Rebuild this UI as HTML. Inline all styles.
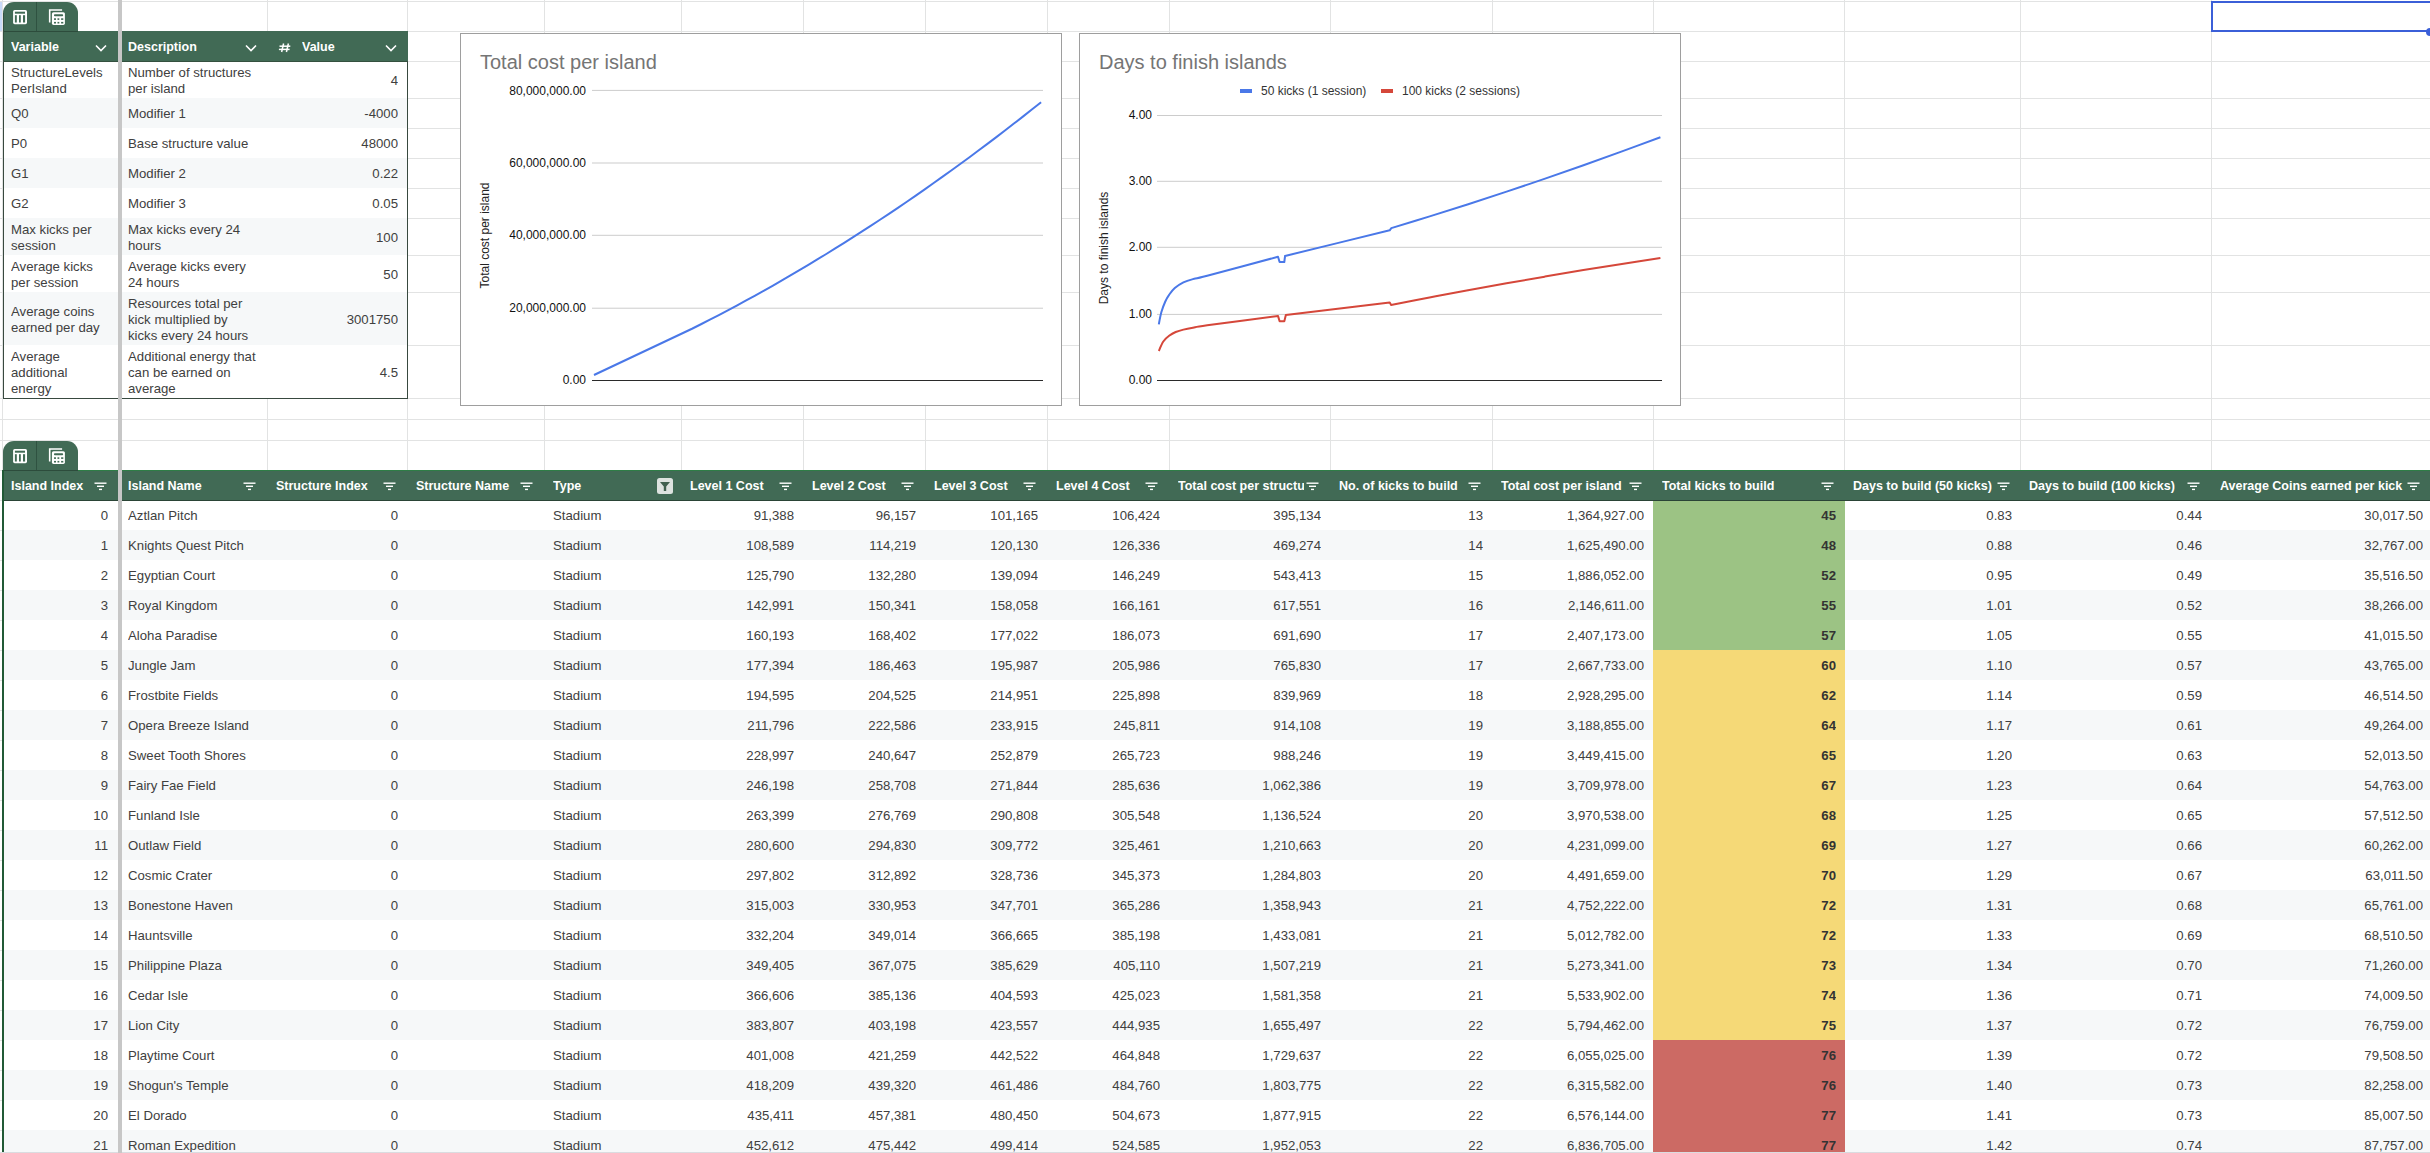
<!DOCTYPE html>
<html><head><meta charset="utf-8"><style>
html,body{margin:0;padding:0;}
body{width:2430px;height:1153px;overflow:hidden;position:relative;background:#fff;font-family:"Liberation Sans", sans-serif;}
</style></head><body>
<div style="position:absolute;left:0px;top:1px;width:2430px;height:1px;background:#e2e3e3;"></div>
<div style="position:absolute;left:0px;top:31px;width:2430px;height:1px;background:#e2e3e3;"></div>
<div style="position:absolute;left:0px;top:61px;width:2430px;height:1px;background:#e2e3e3;"></div>
<div style="position:absolute;left:0px;top:98px;width:2430px;height:1px;background:#e2e3e3;"></div>
<div style="position:absolute;left:0px;top:128px;width:2430px;height:1px;background:#e2e3e3;"></div>
<div style="position:absolute;left:0px;top:158px;width:2430px;height:1px;background:#e2e3e3;"></div>
<div style="position:absolute;left:0px;top:188px;width:2430px;height:1px;background:#e2e3e3;"></div>
<div style="position:absolute;left:0px;top:218px;width:2430px;height:1px;background:#e2e3e3;"></div>
<div style="position:absolute;left:0px;top:255px;width:2430px;height:1px;background:#e2e3e3;"></div>
<div style="position:absolute;left:0px;top:292px;width:2430px;height:1px;background:#e2e3e3;"></div>
<div style="position:absolute;left:0px;top:345px;width:2430px;height:1px;background:#e2e3e3;"></div>
<div style="position:absolute;left:0px;top:398px;width:2430px;height:1px;background:#e2e3e3;"></div>
<div style="position:absolute;left:0px;top:419px;width:2430px;height:1px;background:#e2e3e3;"></div>
<div style="position:absolute;left:0px;top:440px;width:2430px;height:1px;background:#e2e3e3;"></div>
<div style="position:absolute;left:0px;top:470px;width:2430px;height:1px;background:#e2e3e3;"></div>
<div style="position:absolute;left:0px;top:500px;width:2430px;height:1px;background:#e2e3e3;"></div>
<div style="position:absolute;left:0px;top:530px;width:2430px;height:1px;background:#e2e3e3;"></div>
<div style="position:absolute;left:0px;top:560px;width:2430px;height:1px;background:#e2e3e3;"></div>
<div style="position:absolute;left:0px;top:590px;width:2430px;height:1px;background:#e2e3e3;"></div>
<div style="position:absolute;left:0px;top:620px;width:2430px;height:1px;background:#e2e3e3;"></div>
<div style="position:absolute;left:0px;top:650px;width:2430px;height:1px;background:#e2e3e3;"></div>
<div style="position:absolute;left:0px;top:680px;width:2430px;height:1px;background:#e2e3e3;"></div>
<div style="position:absolute;left:0px;top:710px;width:2430px;height:1px;background:#e2e3e3;"></div>
<div style="position:absolute;left:0px;top:740px;width:2430px;height:1px;background:#e2e3e3;"></div>
<div style="position:absolute;left:0px;top:770px;width:2430px;height:1px;background:#e2e3e3;"></div>
<div style="position:absolute;left:0px;top:800px;width:2430px;height:1px;background:#e2e3e3;"></div>
<div style="position:absolute;left:0px;top:830px;width:2430px;height:1px;background:#e2e3e3;"></div>
<div style="position:absolute;left:0px;top:860px;width:2430px;height:1px;background:#e2e3e3;"></div>
<div style="position:absolute;left:0px;top:890px;width:2430px;height:1px;background:#e2e3e3;"></div>
<div style="position:absolute;left:0px;top:920px;width:2430px;height:1px;background:#e2e3e3;"></div>
<div style="position:absolute;left:0px;top:950px;width:2430px;height:1px;background:#e2e3e3;"></div>
<div style="position:absolute;left:0px;top:980px;width:2430px;height:1px;background:#e2e3e3;"></div>
<div style="position:absolute;left:0px;top:1010px;width:2430px;height:1px;background:#e2e3e3;"></div>
<div style="position:absolute;left:0px;top:1040px;width:2430px;height:1px;background:#e2e3e3;"></div>
<div style="position:absolute;left:0px;top:1070px;width:2430px;height:1px;background:#e2e3e3;"></div>
<div style="position:absolute;left:0px;top:1100px;width:2430px;height:1px;background:#e2e3e3;"></div>
<div style="position:absolute;left:0px;top:1130px;width:2430px;height:1px;background:#e2e3e3;"></div>
<div style="position:absolute;left:2px;top:0px;width:1px;height:1153px;background:#e2e3e3;"></div>
<div style="position:absolute;left:267px;top:0px;width:1px;height:1153px;background:#e2e3e3;"></div>
<div style="position:absolute;left:407px;top:0px;width:1px;height:1153px;background:#e2e3e3;"></div>
<div style="position:absolute;left:544px;top:0px;width:1px;height:1153px;background:#e2e3e3;"></div>
<div style="position:absolute;left:681px;top:0px;width:1px;height:1153px;background:#e2e3e3;"></div>
<div style="position:absolute;left:803px;top:0px;width:1px;height:1153px;background:#e2e3e3;"></div>
<div style="position:absolute;left:925px;top:0px;width:1px;height:1153px;background:#e2e3e3;"></div>
<div style="position:absolute;left:1047px;top:0px;width:1px;height:1153px;background:#e2e3e3;"></div>
<div style="position:absolute;left:1169px;top:0px;width:1px;height:1153px;background:#e2e3e3;"></div>
<div style="position:absolute;left:1330px;top:0px;width:1px;height:1153px;background:#e2e3e3;"></div>
<div style="position:absolute;left:1492px;top:0px;width:1px;height:1153px;background:#e2e3e3;"></div>
<div style="position:absolute;left:1653px;top:0px;width:1px;height:1153px;background:#e2e3e3;"></div>
<div style="position:absolute;left:1844px;top:0px;width:1px;height:1153px;background:#e2e3e3;"></div>
<div style="position:absolute;left:2020px;top:0px;width:1px;height:1153px;background:#e2e3e3;"></div>
<div style="position:absolute;left:2211px;top:0px;width:1px;height:1153px;background:#e2e3e3;"></div>
<div style="position:absolute;left:0px;top:2px;width:2px;height:29px;background:#c9daf8;"></div>
<div style="position:absolute;left:3px;top:2px;width:75px;height:29px;background:#416a55;border-radius:11px 11px 0 0;"></div>
<div style="position:absolute;left:36px;top:2px;width:1px;height:29px;background:#2f5241;"></div>
<svg style="position:absolute;left:0px;top:0px" width="80" height="32" viewBox="0 0 80 32"><rect x="13.1" y="9.9" width="13.9" height="14.3" rx="1.6" fill="#fff"/><g fill="#416a55"><rect x="14.9" y="11.7" width="10.1" height="2"/><rect x="14.9" y="15.2" width="1.9" height="7.3"/><rect x="19" y="15.2" width="1.8" height="7.3"/><rect x="23" y="15.2" width="2.1" height="7.3"/></g><path d="M49.7 22.4 V10 H62.1" fill="none" stroke="#fff" stroke-width="1.6"/><rect x="51.9" y="12.2" width="13" height="12.7" rx="1.6" fill="#fff"/><g fill="#416a55"><rect x="54" y="14.2" width="9.1" height="2" rx="0.8"/><rect x="54" y="18.3" width="2" height="1.6"/><rect x="57.5" y="18.3" width="1.8" height="1.6"/><rect x="61.1" y="18.3" width="2.2" height="1.6"/><rect x="54" y="21.9" width="2" height="1.6"/><rect x="57.5" y="21.9" width="1.8" height="1.6"/><rect x="61.1" y="21.9" width="2.2" height="1.6"/></g></svg>
<div style="position:absolute;left:3px;top:31px;width:405px;height:31px;background:#416a55;"></div>
<div style="position:absolute;left:3px;top:31px;width:75px;height:1px;background:#2d4c3c;"></div>
<div style="position:absolute;left:3px;top:13px;width:1px;height:50px;background:#34503f;"></div>
<div style="position:absolute;left:11px;top:31.5px;width:100px;height:30px;font-size:12.5px;line-height:30px;text-align:left;color:#fff;font-weight:bold;white-space:nowrap;overflow:hidden;">Variable</div>
<div style="position:absolute;left:128px;top:31.5px;width:130px;height:30px;font-size:12.5px;line-height:30px;text-align:left;color:#fff;font-weight:bold;white-space:nowrap;overflow:hidden;">Description</div>
<svg style="position:absolute;left:0;top:0" width="300" height="60" viewBox="0 0 300 60"><g stroke="#fff" stroke-width="1.5"><line x1="283.6" y1="43.5" x2="281.6" y2="52"/><line x1="288.4" y1="43.5" x2="286.4" y2="52"/><line x1="279.5" y1="46.2" x2="290.3" y2="46.2"/><line x1="278.9" y1="49.4" x2="289.6" y2="49.4"/></g></svg>
<div style="position:absolute;left:302px;top:31.5px;width:60px;height:30px;font-size:12.5px;line-height:30px;text-align:left;color:#fff;font-weight:bold;white-space:nowrap;overflow:hidden;">Value</div>
<svg style="position:absolute;left:95px;top:44px" width="12" height="8" viewBox="0 0 12 8"><path d="M1 1.5 L6 6.5 L11 1.5" fill="none" stroke="#fff" stroke-width="1.6"/></svg>
<svg style="position:absolute;left:245px;top:44px" width="12" height="8" viewBox="0 0 12 8"><path d="M1 1.5 L6 6.5 L11 1.5" fill="none" stroke="#fff" stroke-width="1.6"/></svg>
<svg style="position:absolute;left:385px;top:44px" width="12" height="8" viewBox="0 0 12 8"><path d="M1 1.5 L6 6.5 L11 1.5" fill="none" stroke="#fff" stroke-width="1.6"/></svg>
<div style="position:absolute;left:3px;top:61px;width:404px;height:37px;background:#fff;"></div>
<div style="position:absolute;left:11px;top:64.5px;width:135px;height:32px;font-size:13.2px;line-height:16px;text-align:left;color:#404040;font-weight:normal;white-space:nowrap;overflow:hidden;">StructureLevels<br>PerIsland</div>
<div style="position:absolute;left:128px;top:64.5px;width:135px;height:32px;font-size:13.2px;line-height:16px;text-align:left;color:#404040;font-weight:normal;white-space:nowrap;overflow:hidden;">Number of structures<br>per island</div>
<div style="position:absolute;left:267px;top:62px;width:131px;height:37px;font-size:13.2px;line-height:37px;text-align:right;color:#404040;font-weight:normal;white-space:nowrap;overflow:hidden;">4</div>
<div style="position:absolute;left:3px;top:98px;width:404px;height:30px;background:#f6f8f9;"></div>
<div style="position:absolute;left:11px;top:99px;width:135px;height:30px;font-size:13.2px;line-height:30px;text-align:left;color:#404040;font-weight:normal;white-space:nowrap;overflow:hidden;">Q0</div>
<div style="position:absolute;left:128px;top:99px;width:135px;height:30px;font-size:13.2px;line-height:30px;text-align:left;color:#404040;font-weight:normal;white-space:nowrap;overflow:hidden;">Modifier 1</div>
<div style="position:absolute;left:267px;top:99px;width:131px;height:30px;font-size:13.2px;line-height:30px;text-align:right;color:#404040;font-weight:normal;white-space:nowrap;overflow:hidden;">-4000</div>
<div style="position:absolute;left:3px;top:128px;width:404px;height:30px;background:#fff;"></div>
<div style="position:absolute;left:11px;top:129px;width:135px;height:30px;font-size:13.2px;line-height:30px;text-align:left;color:#404040;font-weight:normal;white-space:nowrap;overflow:hidden;">P0</div>
<div style="position:absolute;left:128px;top:129px;width:135px;height:30px;font-size:13.2px;line-height:30px;text-align:left;color:#404040;font-weight:normal;white-space:nowrap;overflow:hidden;">Base structure value</div>
<div style="position:absolute;left:267px;top:129px;width:131px;height:30px;font-size:13.2px;line-height:30px;text-align:right;color:#404040;font-weight:normal;white-space:nowrap;overflow:hidden;">48000</div>
<div style="position:absolute;left:3px;top:158px;width:404px;height:30px;background:#f6f8f9;"></div>
<div style="position:absolute;left:11px;top:159px;width:135px;height:30px;font-size:13.2px;line-height:30px;text-align:left;color:#404040;font-weight:normal;white-space:nowrap;overflow:hidden;">G1</div>
<div style="position:absolute;left:128px;top:159px;width:135px;height:30px;font-size:13.2px;line-height:30px;text-align:left;color:#404040;font-weight:normal;white-space:nowrap;overflow:hidden;">Modifier 2</div>
<div style="position:absolute;left:267px;top:159px;width:131px;height:30px;font-size:13.2px;line-height:30px;text-align:right;color:#404040;font-weight:normal;white-space:nowrap;overflow:hidden;">0.22</div>
<div style="position:absolute;left:3px;top:188px;width:404px;height:30px;background:#fff;"></div>
<div style="position:absolute;left:11px;top:189px;width:135px;height:30px;font-size:13.2px;line-height:30px;text-align:left;color:#404040;font-weight:normal;white-space:nowrap;overflow:hidden;">G2</div>
<div style="position:absolute;left:128px;top:189px;width:135px;height:30px;font-size:13.2px;line-height:30px;text-align:left;color:#404040;font-weight:normal;white-space:nowrap;overflow:hidden;">Modifier 3</div>
<div style="position:absolute;left:267px;top:189px;width:131px;height:30px;font-size:13.2px;line-height:30px;text-align:right;color:#404040;font-weight:normal;white-space:nowrap;overflow:hidden;">0.05</div>
<div style="position:absolute;left:3px;top:218px;width:404px;height:37px;background:#f6f8f9;"></div>
<div style="position:absolute;left:11px;top:221.5px;width:135px;height:32px;font-size:13.2px;line-height:16px;text-align:left;color:#404040;font-weight:normal;white-space:nowrap;overflow:hidden;">Max kicks per<br>session</div>
<div style="position:absolute;left:128px;top:221.5px;width:135px;height:32px;font-size:13.2px;line-height:16px;text-align:left;color:#404040;font-weight:normal;white-space:nowrap;overflow:hidden;">Max kicks every 24<br>hours</div>
<div style="position:absolute;left:267px;top:219px;width:131px;height:37px;font-size:13.2px;line-height:37px;text-align:right;color:#404040;font-weight:normal;white-space:nowrap;overflow:hidden;">100</div>
<div style="position:absolute;left:3px;top:255px;width:404px;height:37px;background:#fff;"></div>
<div style="position:absolute;left:11px;top:258.5px;width:135px;height:32px;font-size:13.2px;line-height:16px;text-align:left;color:#404040;font-weight:normal;white-space:nowrap;overflow:hidden;">Average kicks<br>per session</div>
<div style="position:absolute;left:128px;top:258.5px;width:135px;height:32px;font-size:13.2px;line-height:16px;text-align:left;color:#404040;font-weight:normal;white-space:nowrap;overflow:hidden;">Average kicks every<br>24 hours</div>
<div style="position:absolute;left:267px;top:256px;width:131px;height:37px;font-size:13.2px;line-height:37px;text-align:right;color:#404040;font-weight:normal;white-space:nowrap;overflow:hidden;">50</div>
<div style="position:absolute;left:3px;top:292px;width:404px;height:53px;background:#f6f8f9;"></div>
<div style="position:absolute;left:11px;top:303.5px;width:135px;height:32px;font-size:13.2px;line-height:16px;text-align:left;color:#404040;font-weight:normal;white-space:nowrap;overflow:hidden;">Average coins<br>earned per day</div>
<div style="position:absolute;left:128px;top:295.5px;width:135px;height:48px;font-size:13.2px;line-height:16px;text-align:left;color:#404040;font-weight:normal;white-space:nowrap;overflow:hidden;">Resources total per<br>kick multiplied by<br>kicks every 24 hours</div>
<div style="position:absolute;left:267px;top:293px;width:131px;height:53px;font-size:13.2px;line-height:53px;text-align:right;color:#404040;font-weight:normal;white-space:nowrap;overflow:hidden;">3001750</div>
<div style="position:absolute;left:3px;top:345px;width:404px;height:53px;background:#fff;"></div>
<div style="position:absolute;left:11px;top:348.5px;width:135px;height:48px;font-size:13.2px;line-height:16px;text-align:left;color:#404040;font-weight:normal;white-space:nowrap;overflow:hidden;">Average<br>additional<br>energy</div>
<div style="position:absolute;left:128px;top:348.5px;width:135px;height:48px;font-size:13.2px;line-height:16px;text-align:left;color:#404040;font-weight:normal;white-space:nowrap;overflow:hidden;">Additional energy that<br>can be earned on<br>average</div>
<div style="position:absolute;left:267px;top:346px;width:131px;height:53px;font-size:13.2px;line-height:53px;text-align:right;color:#404040;font-weight:normal;white-space:nowrap;overflow:hidden;">4.5</div>
<div style="position:absolute;left:3px;top:61px;width:405px;height:1px;background:#34503f;"></div>
<div style="position:absolute;left:3px;top:61px;width:1px;height:338px;background:#38493f;"></div>
<div style="position:absolute;left:407px;top:61px;width:1px;height:338px;background:#38493f;"></div>
<div style="position:absolute;left:3px;top:398px;width:405px;height:1px;background:#38493f;"></div>
<div style="position:absolute;left:3px;top:441px;width:75px;height:29px;background:#416a55;border-radius:11px 11px 0 0;"></div>
<div style="position:absolute;left:36px;top:441px;width:1px;height:29px;background:#2f5241;"></div>
<svg style="position:absolute;left:0px;top:439px" width="80" height="32" viewBox="0 0 80 32"><rect x="13.1" y="9.9" width="13.9" height="14.3" rx="1.6" fill="#fff"/><g fill="#416a55"><rect x="14.9" y="11.7" width="10.1" height="2"/><rect x="14.9" y="15.2" width="1.9" height="7.3"/><rect x="19" y="15.2" width="1.8" height="7.3"/><rect x="23" y="15.2" width="2.1" height="7.3"/></g><path d="M49.7 22.4 V10 H62.1" fill="none" stroke="#fff" stroke-width="1.6"/><rect x="51.9" y="12.2" width="13" height="12.7" rx="1.6" fill="#fff"/><g fill="#416a55"><rect x="54" y="14.2" width="9.1" height="2" rx="0.8"/><rect x="54" y="18.3" width="2" height="1.6"/><rect x="57.5" y="18.3" width="1.8" height="1.6"/><rect x="61.1" y="18.3" width="2.2" height="1.6"/><rect x="54" y="21.9" width="2" height="1.6"/><rect x="57.5" y="21.9" width="1.8" height="1.6"/><rect x="61.1" y="21.9" width="2.2" height="1.6"/></g></svg>
<div style="position:absolute;left:3px;top:470px;width:2427px;height:30px;background:#416a55;"></div>
<div style="position:absolute;left:78px;top:470px;width:2352px;height:1px;background:#2e7d46;"></div>
<div style="position:absolute;left:3px;top:470px;width:75px;height:1px;background:#2d4c3c;"></div>
<div style="position:absolute;left:11px;top:470.5px;width:81px;height:30px;font-size:12.5px;line-height:30px;text-align:left;color:#fff;font-weight:bold;white-space:nowrap;overflow:hidden;">Island Index</div>
<svg style="position:absolute;left:94.4px;top:482.3px" width="14" height="9" viewBox="0 0 14 9"><g fill="#fff"><rect x="0.5" y="0.5" width="12" height="1.4"/><rect x="3" y="3.6" width="7" height="1.4"/><rect x="5" y="6.7" width="3" height="1.4"/></g></svg>
<div style="position:absolute;left:128px;top:470.5px;width:113px;height:30px;font-size:12.5px;line-height:30px;text-align:left;color:#fff;font-weight:bold;white-space:nowrap;overflow:hidden;">Island Name</div>
<svg style="position:absolute;left:243.4px;top:482.3px" width="14" height="9" viewBox="0 0 14 9"><g fill="#fff"><rect x="0.5" y="0.5" width="12" height="1.4"/><rect x="3" y="3.6" width="7" height="1.4"/><rect x="5" y="6.7" width="3" height="1.4"/></g></svg>
<div style="position:absolute;left:276px;top:470.5px;width:105px;height:30px;font-size:12.5px;line-height:30px;text-align:left;color:#fff;font-weight:bold;white-space:nowrap;overflow:hidden;">Structure Index</div>
<svg style="position:absolute;left:383.4px;top:482.3px" width="14" height="9" viewBox="0 0 14 9"><g fill="#fff"><rect x="0.5" y="0.5" width="12" height="1.4"/><rect x="3" y="3.6" width="7" height="1.4"/><rect x="5" y="6.7" width="3" height="1.4"/></g></svg>
<div style="position:absolute;left:416px;top:470.5px;width:102px;height:30px;font-size:12.5px;line-height:30px;text-align:left;color:#fff;font-weight:bold;white-space:nowrap;overflow:hidden;">Structure Name</div>
<svg style="position:absolute;left:520.4px;top:482.3px" width="14" height="9" viewBox="0 0 14 9"><g fill="#fff"><rect x="0.5" y="0.5" width="12" height="1.4"/><rect x="3" y="3.6" width="7" height="1.4"/><rect x="5" y="6.7" width="3" height="1.4"/></g></svg>
<div style="position:absolute;left:553px;top:470.5px;width:100px;height:30px;font-size:12.5px;line-height:30px;text-align:left;color:#fff;font-weight:bold;white-space:nowrap;overflow:hidden;">Type</div>
<svg style="position:absolute;left:657px;top:478px" width="16" height="16" viewBox="0 0 16 16"><rect x="0" y="0" width="16" height="16" rx="2.5" fill="#dde2df"/><path d="M3 4 H13 L9.2 8.6 V13 H6.8 V8.6 Z" fill="#41604f"/></svg>
<div style="position:absolute;left:690px;top:470.5px;width:87px;height:30px;font-size:12.5px;line-height:30px;text-align:left;color:#fff;font-weight:bold;white-space:nowrap;overflow:hidden;">Level 1 Cost</div>
<svg style="position:absolute;left:779.4px;top:482.3px" width="14" height="9" viewBox="0 0 14 9"><g fill="#fff"><rect x="0.5" y="0.5" width="12" height="1.4"/><rect x="3" y="3.6" width="7" height="1.4"/><rect x="5" y="6.7" width="3" height="1.4"/></g></svg>
<div style="position:absolute;left:812px;top:470.5px;width:87px;height:30px;font-size:12.5px;line-height:30px;text-align:left;color:#fff;font-weight:bold;white-space:nowrap;overflow:hidden;">Level 2 Cost</div>
<svg style="position:absolute;left:901.4px;top:482.3px" width="14" height="9" viewBox="0 0 14 9"><g fill="#fff"><rect x="0.5" y="0.5" width="12" height="1.4"/><rect x="3" y="3.6" width="7" height="1.4"/><rect x="5" y="6.7" width="3" height="1.4"/></g></svg>
<div style="position:absolute;left:934px;top:470.5px;width:87px;height:30px;font-size:12.5px;line-height:30px;text-align:left;color:#fff;font-weight:bold;white-space:nowrap;overflow:hidden;">Level 3 Cost</div>
<svg style="position:absolute;left:1023.4px;top:482.3px" width="14" height="9" viewBox="0 0 14 9"><g fill="#fff"><rect x="0.5" y="0.5" width="12" height="1.4"/><rect x="3" y="3.6" width="7" height="1.4"/><rect x="5" y="6.7" width="3" height="1.4"/></g></svg>
<div style="position:absolute;left:1056px;top:470.5px;width:87px;height:30px;font-size:12.5px;line-height:30px;text-align:left;color:#fff;font-weight:bold;white-space:nowrap;overflow:hidden;">Level 4 Cost</div>
<svg style="position:absolute;left:1145.4px;top:482.3px" width="14" height="9" viewBox="0 0 14 9"><g fill="#fff"><rect x="0.5" y="0.5" width="12" height="1.4"/><rect x="3" y="3.6" width="7" height="1.4"/><rect x="5" y="6.7" width="3" height="1.4"/></g></svg>
<div style="position:absolute;left:1178px;top:470.5px;width:126px;height:30px;font-size:12.5px;line-height:30px;text-align:left;color:#fff;font-weight:bold;white-space:nowrap;overflow:hidden;">Total cost per structure</div>
<svg style="position:absolute;left:1306.4px;top:482.3px" width="14" height="9" viewBox="0 0 14 9"><g fill="#fff"><rect x="0.5" y="0.5" width="12" height="1.4"/><rect x="3" y="3.6" width="7" height="1.4"/><rect x="5" y="6.7" width="3" height="1.4"/></g></svg>
<div style="position:absolute;left:1339px;top:470.5px;width:127px;height:30px;font-size:12.5px;line-height:30px;text-align:left;color:#fff;font-weight:bold;white-space:nowrap;overflow:hidden;">No. of kicks to build</div>
<svg style="position:absolute;left:1468.4px;top:482.3px" width="14" height="9" viewBox="0 0 14 9"><g fill="#fff"><rect x="0.5" y="0.5" width="12" height="1.4"/><rect x="3" y="3.6" width="7" height="1.4"/><rect x="5" y="6.7" width="3" height="1.4"/></g></svg>
<div style="position:absolute;left:1501px;top:470.5px;width:126px;height:30px;font-size:12.5px;line-height:30px;text-align:left;color:#fff;font-weight:bold;white-space:nowrap;overflow:hidden;">Total cost per island</div>
<svg style="position:absolute;left:1629.4px;top:482.3px" width="14" height="9" viewBox="0 0 14 9"><g fill="#fff"><rect x="0.5" y="0.5" width="12" height="1.4"/><rect x="3" y="3.6" width="7" height="1.4"/><rect x="5" y="6.7" width="3" height="1.4"/></g></svg>
<div style="position:absolute;left:1662px;top:470.5px;width:157px;height:30px;font-size:12.5px;line-height:30px;text-align:left;color:#fff;font-weight:bold;white-space:nowrap;overflow:hidden;">Total kicks to build</div>
<svg style="position:absolute;left:1821.4px;top:482.3px" width="14" height="9" viewBox="0 0 14 9"><g fill="#fff"><rect x="0.5" y="0.5" width="12" height="1.4"/><rect x="3" y="3.6" width="7" height="1.4"/><rect x="5" y="6.7" width="3" height="1.4"/></g></svg>
<div style="position:absolute;left:1853px;top:470.5px;width:142px;height:30px;font-size:12.5px;line-height:30px;text-align:left;color:#fff;font-weight:bold;white-space:nowrap;overflow:hidden;">Days to build (50 kicks)</div>
<svg style="position:absolute;left:1997.4px;top:482.3px" width="14" height="9" viewBox="0 0 14 9"><g fill="#fff"><rect x="0.5" y="0.5" width="12" height="1.4"/><rect x="3" y="3.6" width="7" height="1.4"/><rect x="5" y="6.7" width="3" height="1.4"/></g></svg>
<div style="position:absolute;left:2029px;top:470.5px;width:156px;height:30px;font-size:12.5px;line-height:30px;text-align:left;color:#fff;font-weight:bold;white-space:nowrap;overflow:hidden;">Days to build (100 kicks)</div>
<svg style="position:absolute;left:2187.4px;top:482.3px" width="14" height="9" viewBox="0 0 14 9"><g fill="#fff"><rect x="0.5" y="0.5" width="12" height="1.4"/><rect x="3" y="3.6" width="7" height="1.4"/><rect x="5" y="6.7" width="3" height="1.4"/></g></svg>
<div style="position:absolute;left:2220px;top:470.5px;width:185px;height:30px;font-size:12.5px;line-height:30px;text-align:left;color:#fff;font-weight:bold;white-space:nowrap;overflow:hidden;">Average Coins earned per kick</div>
<svg style="position:absolute;left:2407.4px;top:482.3px" width="14" height="9" viewBox="0 0 14 9"><g fill="#fff"><rect x="0.5" y="0.5" width="12" height="1.4"/><rect x="3" y="3.6" width="7" height="1.4"/><rect x="5" y="6.7" width="3" height="1.4"/></g></svg>
<div style="position:absolute;left:3px;top:500px;width:2427px;height:30px;background:#fff;"></div>
<div style="position:absolute;left:1653px;top:500px;width:192px;height:30px;background:#9cc384;"></div>
<div style="position:absolute;left:3px;top:501px;width:105px;height:30px;font-size:13.2px;line-height:30px;text-align:right;color:#404040;font-weight:normal;white-space:nowrap;overflow:hidden;">0</div>
<div style="position:absolute;left:128px;top:501px;width:139px;height:30px;font-size:13.2px;line-height:30px;text-align:left;color:#404040;font-weight:normal;white-space:nowrap;overflow:hidden;">Aztlan Pitch</div>
<div style="position:absolute;left:267px;top:501px;width:131px;height:30px;font-size:13.2px;line-height:30px;text-align:right;color:#404040;font-weight:normal;white-space:nowrap;overflow:hidden;">0</div>
<div style="position:absolute;left:553px;top:501px;width:128px;height:30px;font-size:13.2px;line-height:30px;text-align:left;color:#404040;font-weight:normal;white-space:nowrap;overflow:hidden;">Stadium</div>
<div style="position:absolute;left:681px;top:501px;width:113px;height:30px;font-size:13.2px;line-height:30px;text-align:right;color:#404040;font-weight:normal;white-space:nowrap;overflow:hidden;">91,388</div>
<div style="position:absolute;left:803px;top:501px;width:113px;height:30px;font-size:13.2px;line-height:30px;text-align:right;color:#404040;font-weight:normal;white-space:nowrap;overflow:hidden;">96,157</div>
<div style="position:absolute;left:925px;top:501px;width:113px;height:30px;font-size:13.2px;line-height:30px;text-align:right;color:#404040;font-weight:normal;white-space:nowrap;overflow:hidden;">101,165</div>
<div style="position:absolute;left:1047px;top:501px;width:113px;height:30px;font-size:13.2px;line-height:30px;text-align:right;color:#404040;font-weight:normal;white-space:nowrap;overflow:hidden;">106,424</div>
<div style="position:absolute;left:1169px;top:501px;width:152px;height:30px;font-size:13.2px;line-height:30px;text-align:right;color:#404040;font-weight:normal;white-space:nowrap;overflow:hidden;">395,134</div>
<div style="position:absolute;left:1330px;top:501px;width:153px;height:30px;font-size:13.2px;line-height:30px;text-align:right;color:#404040;font-weight:normal;white-space:nowrap;overflow:hidden;">13</div>
<div style="position:absolute;left:1492px;top:501px;width:152px;height:30px;font-size:13.2px;line-height:30px;text-align:right;color:#404040;font-weight:normal;white-space:nowrap;overflow:hidden;">1,364,927.00</div>
<div style="position:absolute;left:1653px;top:501px;width:183px;height:30px;font-size:13.2px;line-height:30px;text-align:right;color:#333;font-weight:bold;white-space:nowrap;overflow:hidden;">45</div>
<div style="position:absolute;left:1845px;top:501px;width:167px;height:30px;font-size:13.2px;line-height:30px;text-align:right;color:#404040;font-weight:normal;white-space:nowrap;overflow:hidden;">0.83</div>
<div style="position:absolute;left:2021px;top:501px;width:181px;height:30px;font-size:13.2px;line-height:30px;text-align:right;color:#404040;font-weight:normal;white-space:nowrap;overflow:hidden;">0.44</div>
<div style="position:absolute;left:2211px;top:501px;width:212px;height:30px;font-size:13.2px;line-height:30px;text-align:right;color:#404040;font-weight:normal;white-space:nowrap;overflow:hidden;">30,017.50</div>
<div style="position:absolute;left:3px;top:530px;width:2427px;height:30px;background:#f6f8f9;"></div>
<div style="position:absolute;left:1653px;top:530px;width:192px;height:30px;background:#9cc384;"></div>
<div style="position:absolute;left:3px;top:531px;width:105px;height:30px;font-size:13.2px;line-height:30px;text-align:right;color:#404040;font-weight:normal;white-space:nowrap;overflow:hidden;">1</div>
<div style="position:absolute;left:128px;top:531px;width:139px;height:30px;font-size:13.2px;line-height:30px;text-align:left;color:#404040;font-weight:normal;white-space:nowrap;overflow:hidden;">Knights Quest Pitch</div>
<div style="position:absolute;left:267px;top:531px;width:131px;height:30px;font-size:13.2px;line-height:30px;text-align:right;color:#404040;font-weight:normal;white-space:nowrap;overflow:hidden;">0</div>
<div style="position:absolute;left:553px;top:531px;width:128px;height:30px;font-size:13.2px;line-height:30px;text-align:left;color:#404040;font-weight:normal;white-space:nowrap;overflow:hidden;">Stadium</div>
<div style="position:absolute;left:681px;top:531px;width:113px;height:30px;font-size:13.2px;line-height:30px;text-align:right;color:#404040;font-weight:normal;white-space:nowrap;overflow:hidden;">108,589</div>
<div style="position:absolute;left:803px;top:531px;width:113px;height:30px;font-size:13.2px;line-height:30px;text-align:right;color:#404040;font-weight:normal;white-space:nowrap;overflow:hidden;">114,219</div>
<div style="position:absolute;left:925px;top:531px;width:113px;height:30px;font-size:13.2px;line-height:30px;text-align:right;color:#404040;font-weight:normal;white-space:nowrap;overflow:hidden;">120,130</div>
<div style="position:absolute;left:1047px;top:531px;width:113px;height:30px;font-size:13.2px;line-height:30px;text-align:right;color:#404040;font-weight:normal;white-space:nowrap;overflow:hidden;">126,336</div>
<div style="position:absolute;left:1169px;top:531px;width:152px;height:30px;font-size:13.2px;line-height:30px;text-align:right;color:#404040;font-weight:normal;white-space:nowrap;overflow:hidden;">469,274</div>
<div style="position:absolute;left:1330px;top:531px;width:153px;height:30px;font-size:13.2px;line-height:30px;text-align:right;color:#404040;font-weight:normal;white-space:nowrap;overflow:hidden;">14</div>
<div style="position:absolute;left:1492px;top:531px;width:152px;height:30px;font-size:13.2px;line-height:30px;text-align:right;color:#404040;font-weight:normal;white-space:nowrap;overflow:hidden;">1,625,490.00</div>
<div style="position:absolute;left:1653px;top:531px;width:183px;height:30px;font-size:13.2px;line-height:30px;text-align:right;color:#333;font-weight:bold;white-space:nowrap;overflow:hidden;">48</div>
<div style="position:absolute;left:1845px;top:531px;width:167px;height:30px;font-size:13.2px;line-height:30px;text-align:right;color:#404040;font-weight:normal;white-space:nowrap;overflow:hidden;">0.88</div>
<div style="position:absolute;left:2021px;top:531px;width:181px;height:30px;font-size:13.2px;line-height:30px;text-align:right;color:#404040;font-weight:normal;white-space:nowrap;overflow:hidden;">0.46</div>
<div style="position:absolute;left:2211px;top:531px;width:212px;height:30px;font-size:13.2px;line-height:30px;text-align:right;color:#404040;font-weight:normal;white-space:nowrap;overflow:hidden;">32,767.00</div>
<div style="position:absolute;left:3px;top:560px;width:2427px;height:30px;background:#fff;"></div>
<div style="position:absolute;left:1653px;top:560px;width:192px;height:30px;background:#9cc384;"></div>
<div style="position:absolute;left:3px;top:561px;width:105px;height:30px;font-size:13.2px;line-height:30px;text-align:right;color:#404040;font-weight:normal;white-space:nowrap;overflow:hidden;">2</div>
<div style="position:absolute;left:128px;top:561px;width:139px;height:30px;font-size:13.2px;line-height:30px;text-align:left;color:#404040;font-weight:normal;white-space:nowrap;overflow:hidden;">Egyptian Court</div>
<div style="position:absolute;left:267px;top:561px;width:131px;height:30px;font-size:13.2px;line-height:30px;text-align:right;color:#404040;font-weight:normal;white-space:nowrap;overflow:hidden;">0</div>
<div style="position:absolute;left:553px;top:561px;width:128px;height:30px;font-size:13.2px;line-height:30px;text-align:left;color:#404040;font-weight:normal;white-space:nowrap;overflow:hidden;">Stadium</div>
<div style="position:absolute;left:681px;top:561px;width:113px;height:30px;font-size:13.2px;line-height:30px;text-align:right;color:#404040;font-weight:normal;white-space:nowrap;overflow:hidden;">125,790</div>
<div style="position:absolute;left:803px;top:561px;width:113px;height:30px;font-size:13.2px;line-height:30px;text-align:right;color:#404040;font-weight:normal;white-space:nowrap;overflow:hidden;">132,280</div>
<div style="position:absolute;left:925px;top:561px;width:113px;height:30px;font-size:13.2px;line-height:30px;text-align:right;color:#404040;font-weight:normal;white-space:nowrap;overflow:hidden;">139,094</div>
<div style="position:absolute;left:1047px;top:561px;width:113px;height:30px;font-size:13.2px;line-height:30px;text-align:right;color:#404040;font-weight:normal;white-space:nowrap;overflow:hidden;">146,249</div>
<div style="position:absolute;left:1169px;top:561px;width:152px;height:30px;font-size:13.2px;line-height:30px;text-align:right;color:#404040;font-weight:normal;white-space:nowrap;overflow:hidden;">543,413</div>
<div style="position:absolute;left:1330px;top:561px;width:153px;height:30px;font-size:13.2px;line-height:30px;text-align:right;color:#404040;font-weight:normal;white-space:nowrap;overflow:hidden;">15</div>
<div style="position:absolute;left:1492px;top:561px;width:152px;height:30px;font-size:13.2px;line-height:30px;text-align:right;color:#404040;font-weight:normal;white-space:nowrap;overflow:hidden;">1,886,052.00</div>
<div style="position:absolute;left:1653px;top:561px;width:183px;height:30px;font-size:13.2px;line-height:30px;text-align:right;color:#333;font-weight:bold;white-space:nowrap;overflow:hidden;">52</div>
<div style="position:absolute;left:1845px;top:561px;width:167px;height:30px;font-size:13.2px;line-height:30px;text-align:right;color:#404040;font-weight:normal;white-space:nowrap;overflow:hidden;">0.95</div>
<div style="position:absolute;left:2021px;top:561px;width:181px;height:30px;font-size:13.2px;line-height:30px;text-align:right;color:#404040;font-weight:normal;white-space:nowrap;overflow:hidden;">0.49</div>
<div style="position:absolute;left:2211px;top:561px;width:212px;height:30px;font-size:13.2px;line-height:30px;text-align:right;color:#404040;font-weight:normal;white-space:nowrap;overflow:hidden;">35,516.50</div>
<div style="position:absolute;left:3px;top:590px;width:2427px;height:30px;background:#f6f8f9;"></div>
<div style="position:absolute;left:1653px;top:590px;width:192px;height:30px;background:#9cc384;"></div>
<div style="position:absolute;left:3px;top:591px;width:105px;height:30px;font-size:13.2px;line-height:30px;text-align:right;color:#404040;font-weight:normal;white-space:nowrap;overflow:hidden;">3</div>
<div style="position:absolute;left:128px;top:591px;width:139px;height:30px;font-size:13.2px;line-height:30px;text-align:left;color:#404040;font-weight:normal;white-space:nowrap;overflow:hidden;">Royal Kingdom</div>
<div style="position:absolute;left:267px;top:591px;width:131px;height:30px;font-size:13.2px;line-height:30px;text-align:right;color:#404040;font-weight:normal;white-space:nowrap;overflow:hidden;">0</div>
<div style="position:absolute;left:553px;top:591px;width:128px;height:30px;font-size:13.2px;line-height:30px;text-align:left;color:#404040;font-weight:normal;white-space:nowrap;overflow:hidden;">Stadium</div>
<div style="position:absolute;left:681px;top:591px;width:113px;height:30px;font-size:13.2px;line-height:30px;text-align:right;color:#404040;font-weight:normal;white-space:nowrap;overflow:hidden;">142,991</div>
<div style="position:absolute;left:803px;top:591px;width:113px;height:30px;font-size:13.2px;line-height:30px;text-align:right;color:#404040;font-weight:normal;white-space:nowrap;overflow:hidden;">150,341</div>
<div style="position:absolute;left:925px;top:591px;width:113px;height:30px;font-size:13.2px;line-height:30px;text-align:right;color:#404040;font-weight:normal;white-space:nowrap;overflow:hidden;">158,058</div>
<div style="position:absolute;left:1047px;top:591px;width:113px;height:30px;font-size:13.2px;line-height:30px;text-align:right;color:#404040;font-weight:normal;white-space:nowrap;overflow:hidden;">166,161</div>
<div style="position:absolute;left:1169px;top:591px;width:152px;height:30px;font-size:13.2px;line-height:30px;text-align:right;color:#404040;font-weight:normal;white-space:nowrap;overflow:hidden;">617,551</div>
<div style="position:absolute;left:1330px;top:591px;width:153px;height:30px;font-size:13.2px;line-height:30px;text-align:right;color:#404040;font-weight:normal;white-space:nowrap;overflow:hidden;">16</div>
<div style="position:absolute;left:1492px;top:591px;width:152px;height:30px;font-size:13.2px;line-height:30px;text-align:right;color:#404040;font-weight:normal;white-space:nowrap;overflow:hidden;">2,146,611.00</div>
<div style="position:absolute;left:1653px;top:591px;width:183px;height:30px;font-size:13.2px;line-height:30px;text-align:right;color:#333;font-weight:bold;white-space:nowrap;overflow:hidden;">55</div>
<div style="position:absolute;left:1845px;top:591px;width:167px;height:30px;font-size:13.2px;line-height:30px;text-align:right;color:#404040;font-weight:normal;white-space:nowrap;overflow:hidden;">1.01</div>
<div style="position:absolute;left:2021px;top:591px;width:181px;height:30px;font-size:13.2px;line-height:30px;text-align:right;color:#404040;font-weight:normal;white-space:nowrap;overflow:hidden;">0.52</div>
<div style="position:absolute;left:2211px;top:591px;width:212px;height:30px;font-size:13.2px;line-height:30px;text-align:right;color:#404040;font-weight:normal;white-space:nowrap;overflow:hidden;">38,266.00</div>
<div style="position:absolute;left:3px;top:620px;width:2427px;height:30px;background:#fff;"></div>
<div style="position:absolute;left:1653px;top:620px;width:192px;height:30px;background:#9cc384;"></div>
<div style="position:absolute;left:3px;top:621px;width:105px;height:30px;font-size:13.2px;line-height:30px;text-align:right;color:#404040;font-weight:normal;white-space:nowrap;overflow:hidden;">4</div>
<div style="position:absolute;left:128px;top:621px;width:139px;height:30px;font-size:13.2px;line-height:30px;text-align:left;color:#404040;font-weight:normal;white-space:nowrap;overflow:hidden;">Aloha Paradise</div>
<div style="position:absolute;left:267px;top:621px;width:131px;height:30px;font-size:13.2px;line-height:30px;text-align:right;color:#404040;font-weight:normal;white-space:nowrap;overflow:hidden;">0</div>
<div style="position:absolute;left:553px;top:621px;width:128px;height:30px;font-size:13.2px;line-height:30px;text-align:left;color:#404040;font-weight:normal;white-space:nowrap;overflow:hidden;">Stadium</div>
<div style="position:absolute;left:681px;top:621px;width:113px;height:30px;font-size:13.2px;line-height:30px;text-align:right;color:#404040;font-weight:normal;white-space:nowrap;overflow:hidden;">160,193</div>
<div style="position:absolute;left:803px;top:621px;width:113px;height:30px;font-size:13.2px;line-height:30px;text-align:right;color:#404040;font-weight:normal;white-space:nowrap;overflow:hidden;">168,402</div>
<div style="position:absolute;left:925px;top:621px;width:113px;height:30px;font-size:13.2px;line-height:30px;text-align:right;color:#404040;font-weight:normal;white-space:nowrap;overflow:hidden;">177,022</div>
<div style="position:absolute;left:1047px;top:621px;width:113px;height:30px;font-size:13.2px;line-height:30px;text-align:right;color:#404040;font-weight:normal;white-space:nowrap;overflow:hidden;">186,073</div>
<div style="position:absolute;left:1169px;top:621px;width:152px;height:30px;font-size:13.2px;line-height:30px;text-align:right;color:#404040;font-weight:normal;white-space:nowrap;overflow:hidden;">691,690</div>
<div style="position:absolute;left:1330px;top:621px;width:153px;height:30px;font-size:13.2px;line-height:30px;text-align:right;color:#404040;font-weight:normal;white-space:nowrap;overflow:hidden;">17</div>
<div style="position:absolute;left:1492px;top:621px;width:152px;height:30px;font-size:13.2px;line-height:30px;text-align:right;color:#404040;font-weight:normal;white-space:nowrap;overflow:hidden;">2,407,173.00</div>
<div style="position:absolute;left:1653px;top:621px;width:183px;height:30px;font-size:13.2px;line-height:30px;text-align:right;color:#333;font-weight:bold;white-space:nowrap;overflow:hidden;">57</div>
<div style="position:absolute;left:1845px;top:621px;width:167px;height:30px;font-size:13.2px;line-height:30px;text-align:right;color:#404040;font-weight:normal;white-space:nowrap;overflow:hidden;">1.05</div>
<div style="position:absolute;left:2021px;top:621px;width:181px;height:30px;font-size:13.2px;line-height:30px;text-align:right;color:#404040;font-weight:normal;white-space:nowrap;overflow:hidden;">0.55</div>
<div style="position:absolute;left:2211px;top:621px;width:212px;height:30px;font-size:13.2px;line-height:30px;text-align:right;color:#404040;font-weight:normal;white-space:nowrap;overflow:hidden;">41,015.50</div>
<div style="position:absolute;left:3px;top:650px;width:2427px;height:30px;background:#f6f8f9;"></div>
<div style="position:absolute;left:1653px;top:650px;width:192px;height:30px;background:#f5d977;"></div>
<div style="position:absolute;left:3px;top:651px;width:105px;height:30px;font-size:13.2px;line-height:30px;text-align:right;color:#404040;font-weight:normal;white-space:nowrap;overflow:hidden;">5</div>
<div style="position:absolute;left:128px;top:651px;width:139px;height:30px;font-size:13.2px;line-height:30px;text-align:left;color:#404040;font-weight:normal;white-space:nowrap;overflow:hidden;">Jungle Jam</div>
<div style="position:absolute;left:267px;top:651px;width:131px;height:30px;font-size:13.2px;line-height:30px;text-align:right;color:#404040;font-weight:normal;white-space:nowrap;overflow:hidden;">0</div>
<div style="position:absolute;left:553px;top:651px;width:128px;height:30px;font-size:13.2px;line-height:30px;text-align:left;color:#404040;font-weight:normal;white-space:nowrap;overflow:hidden;">Stadium</div>
<div style="position:absolute;left:681px;top:651px;width:113px;height:30px;font-size:13.2px;line-height:30px;text-align:right;color:#404040;font-weight:normal;white-space:nowrap;overflow:hidden;">177,394</div>
<div style="position:absolute;left:803px;top:651px;width:113px;height:30px;font-size:13.2px;line-height:30px;text-align:right;color:#404040;font-weight:normal;white-space:nowrap;overflow:hidden;">186,463</div>
<div style="position:absolute;left:925px;top:651px;width:113px;height:30px;font-size:13.2px;line-height:30px;text-align:right;color:#404040;font-weight:normal;white-space:nowrap;overflow:hidden;">195,987</div>
<div style="position:absolute;left:1047px;top:651px;width:113px;height:30px;font-size:13.2px;line-height:30px;text-align:right;color:#404040;font-weight:normal;white-space:nowrap;overflow:hidden;">205,986</div>
<div style="position:absolute;left:1169px;top:651px;width:152px;height:30px;font-size:13.2px;line-height:30px;text-align:right;color:#404040;font-weight:normal;white-space:nowrap;overflow:hidden;">765,830</div>
<div style="position:absolute;left:1330px;top:651px;width:153px;height:30px;font-size:13.2px;line-height:30px;text-align:right;color:#404040;font-weight:normal;white-space:nowrap;overflow:hidden;">17</div>
<div style="position:absolute;left:1492px;top:651px;width:152px;height:30px;font-size:13.2px;line-height:30px;text-align:right;color:#404040;font-weight:normal;white-space:nowrap;overflow:hidden;">2,667,733.00</div>
<div style="position:absolute;left:1653px;top:651px;width:183px;height:30px;font-size:13.2px;line-height:30px;text-align:right;color:#333;font-weight:bold;white-space:nowrap;overflow:hidden;">60</div>
<div style="position:absolute;left:1845px;top:651px;width:167px;height:30px;font-size:13.2px;line-height:30px;text-align:right;color:#404040;font-weight:normal;white-space:nowrap;overflow:hidden;">1.10</div>
<div style="position:absolute;left:2021px;top:651px;width:181px;height:30px;font-size:13.2px;line-height:30px;text-align:right;color:#404040;font-weight:normal;white-space:nowrap;overflow:hidden;">0.57</div>
<div style="position:absolute;left:2211px;top:651px;width:212px;height:30px;font-size:13.2px;line-height:30px;text-align:right;color:#404040;font-weight:normal;white-space:nowrap;overflow:hidden;">43,765.00</div>
<div style="position:absolute;left:3px;top:680px;width:2427px;height:30px;background:#fff;"></div>
<div style="position:absolute;left:1653px;top:680px;width:192px;height:30px;background:#f5d977;"></div>
<div style="position:absolute;left:3px;top:681px;width:105px;height:30px;font-size:13.2px;line-height:30px;text-align:right;color:#404040;font-weight:normal;white-space:nowrap;overflow:hidden;">6</div>
<div style="position:absolute;left:128px;top:681px;width:139px;height:30px;font-size:13.2px;line-height:30px;text-align:left;color:#404040;font-weight:normal;white-space:nowrap;overflow:hidden;">Frostbite Fields</div>
<div style="position:absolute;left:267px;top:681px;width:131px;height:30px;font-size:13.2px;line-height:30px;text-align:right;color:#404040;font-weight:normal;white-space:nowrap;overflow:hidden;">0</div>
<div style="position:absolute;left:553px;top:681px;width:128px;height:30px;font-size:13.2px;line-height:30px;text-align:left;color:#404040;font-weight:normal;white-space:nowrap;overflow:hidden;">Stadium</div>
<div style="position:absolute;left:681px;top:681px;width:113px;height:30px;font-size:13.2px;line-height:30px;text-align:right;color:#404040;font-weight:normal;white-space:nowrap;overflow:hidden;">194,595</div>
<div style="position:absolute;left:803px;top:681px;width:113px;height:30px;font-size:13.2px;line-height:30px;text-align:right;color:#404040;font-weight:normal;white-space:nowrap;overflow:hidden;">204,525</div>
<div style="position:absolute;left:925px;top:681px;width:113px;height:30px;font-size:13.2px;line-height:30px;text-align:right;color:#404040;font-weight:normal;white-space:nowrap;overflow:hidden;">214,951</div>
<div style="position:absolute;left:1047px;top:681px;width:113px;height:30px;font-size:13.2px;line-height:30px;text-align:right;color:#404040;font-weight:normal;white-space:nowrap;overflow:hidden;">225,898</div>
<div style="position:absolute;left:1169px;top:681px;width:152px;height:30px;font-size:13.2px;line-height:30px;text-align:right;color:#404040;font-weight:normal;white-space:nowrap;overflow:hidden;">839,969</div>
<div style="position:absolute;left:1330px;top:681px;width:153px;height:30px;font-size:13.2px;line-height:30px;text-align:right;color:#404040;font-weight:normal;white-space:nowrap;overflow:hidden;">18</div>
<div style="position:absolute;left:1492px;top:681px;width:152px;height:30px;font-size:13.2px;line-height:30px;text-align:right;color:#404040;font-weight:normal;white-space:nowrap;overflow:hidden;">2,928,295.00</div>
<div style="position:absolute;left:1653px;top:681px;width:183px;height:30px;font-size:13.2px;line-height:30px;text-align:right;color:#333;font-weight:bold;white-space:nowrap;overflow:hidden;">62</div>
<div style="position:absolute;left:1845px;top:681px;width:167px;height:30px;font-size:13.2px;line-height:30px;text-align:right;color:#404040;font-weight:normal;white-space:nowrap;overflow:hidden;">1.14</div>
<div style="position:absolute;left:2021px;top:681px;width:181px;height:30px;font-size:13.2px;line-height:30px;text-align:right;color:#404040;font-weight:normal;white-space:nowrap;overflow:hidden;">0.59</div>
<div style="position:absolute;left:2211px;top:681px;width:212px;height:30px;font-size:13.2px;line-height:30px;text-align:right;color:#404040;font-weight:normal;white-space:nowrap;overflow:hidden;">46,514.50</div>
<div style="position:absolute;left:3px;top:710px;width:2427px;height:30px;background:#f6f8f9;"></div>
<div style="position:absolute;left:1653px;top:710px;width:192px;height:30px;background:#f5d977;"></div>
<div style="position:absolute;left:3px;top:711px;width:105px;height:30px;font-size:13.2px;line-height:30px;text-align:right;color:#404040;font-weight:normal;white-space:nowrap;overflow:hidden;">7</div>
<div style="position:absolute;left:128px;top:711px;width:139px;height:30px;font-size:13.2px;line-height:30px;text-align:left;color:#404040;font-weight:normal;white-space:nowrap;overflow:hidden;">Opera Breeze Island</div>
<div style="position:absolute;left:267px;top:711px;width:131px;height:30px;font-size:13.2px;line-height:30px;text-align:right;color:#404040;font-weight:normal;white-space:nowrap;overflow:hidden;">0</div>
<div style="position:absolute;left:553px;top:711px;width:128px;height:30px;font-size:13.2px;line-height:30px;text-align:left;color:#404040;font-weight:normal;white-space:nowrap;overflow:hidden;">Stadium</div>
<div style="position:absolute;left:681px;top:711px;width:113px;height:30px;font-size:13.2px;line-height:30px;text-align:right;color:#404040;font-weight:normal;white-space:nowrap;overflow:hidden;">211,796</div>
<div style="position:absolute;left:803px;top:711px;width:113px;height:30px;font-size:13.2px;line-height:30px;text-align:right;color:#404040;font-weight:normal;white-space:nowrap;overflow:hidden;">222,586</div>
<div style="position:absolute;left:925px;top:711px;width:113px;height:30px;font-size:13.2px;line-height:30px;text-align:right;color:#404040;font-weight:normal;white-space:nowrap;overflow:hidden;">233,915</div>
<div style="position:absolute;left:1047px;top:711px;width:113px;height:30px;font-size:13.2px;line-height:30px;text-align:right;color:#404040;font-weight:normal;white-space:nowrap;overflow:hidden;">245,811</div>
<div style="position:absolute;left:1169px;top:711px;width:152px;height:30px;font-size:13.2px;line-height:30px;text-align:right;color:#404040;font-weight:normal;white-space:nowrap;overflow:hidden;">914,108</div>
<div style="position:absolute;left:1330px;top:711px;width:153px;height:30px;font-size:13.2px;line-height:30px;text-align:right;color:#404040;font-weight:normal;white-space:nowrap;overflow:hidden;">19</div>
<div style="position:absolute;left:1492px;top:711px;width:152px;height:30px;font-size:13.2px;line-height:30px;text-align:right;color:#404040;font-weight:normal;white-space:nowrap;overflow:hidden;">3,188,855.00</div>
<div style="position:absolute;left:1653px;top:711px;width:183px;height:30px;font-size:13.2px;line-height:30px;text-align:right;color:#333;font-weight:bold;white-space:nowrap;overflow:hidden;">64</div>
<div style="position:absolute;left:1845px;top:711px;width:167px;height:30px;font-size:13.2px;line-height:30px;text-align:right;color:#404040;font-weight:normal;white-space:nowrap;overflow:hidden;">1.17</div>
<div style="position:absolute;left:2021px;top:711px;width:181px;height:30px;font-size:13.2px;line-height:30px;text-align:right;color:#404040;font-weight:normal;white-space:nowrap;overflow:hidden;">0.61</div>
<div style="position:absolute;left:2211px;top:711px;width:212px;height:30px;font-size:13.2px;line-height:30px;text-align:right;color:#404040;font-weight:normal;white-space:nowrap;overflow:hidden;">49,264.00</div>
<div style="position:absolute;left:3px;top:740px;width:2427px;height:30px;background:#fff;"></div>
<div style="position:absolute;left:1653px;top:740px;width:192px;height:30px;background:#f5d977;"></div>
<div style="position:absolute;left:3px;top:741px;width:105px;height:30px;font-size:13.2px;line-height:30px;text-align:right;color:#404040;font-weight:normal;white-space:nowrap;overflow:hidden;">8</div>
<div style="position:absolute;left:128px;top:741px;width:139px;height:30px;font-size:13.2px;line-height:30px;text-align:left;color:#404040;font-weight:normal;white-space:nowrap;overflow:hidden;">Sweet Tooth Shores</div>
<div style="position:absolute;left:267px;top:741px;width:131px;height:30px;font-size:13.2px;line-height:30px;text-align:right;color:#404040;font-weight:normal;white-space:nowrap;overflow:hidden;">0</div>
<div style="position:absolute;left:553px;top:741px;width:128px;height:30px;font-size:13.2px;line-height:30px;text-align:left;color:#404040;font-weight:normal;white-space:nowrap;overflow:hidden;">Stadium</div>
<div style="position:absolute;left:681px;top:741px;width:113px;height:30px;font-size:13.2px;line-height:30px;text-align:right;color:#404040;font-weight:normal;white-space:nowrap;overflow:hidden;">228,997</div>
<div style="position:absolute;left:803px;top:741px;width:113px;height:30px;font-size:13.2px;line-height:30px;text-align:right;color:#404040;font-weight:normal;white-space:nowrap;overflow:hidden;">240,647</div>
<div style="position:absolute;left:925px;top:741px;width:113px;height:30px;font-size:13.2px;line-height:30px;text-align:right;color:#404040;font-weight:normal;white-space:nowrap;overflow:hidden;">252,879</div>
<div style="position:absolute;left:1047px;top:741px;width:113px;height:30px;font-size:13.2px;line-height:30px;text-align:right;color:#404040;font-weight:normal;white-space:nowrap;overflow:hidden;">265,723</div>
<div style="position:absolute;left:1169px;top:741px;width:152px;height:30px;font-size:13.2px;line-height:30px;text-align:right;color:#404040;font-weight:normal;white-space:nowrap;overflow:hidden;">988,246</div>
<div style="position:absolute;left:1330px;top:741px;width:153px;height:30px;font-size:13.2px;line-height:30px;text-align:right;color:#404040;font-weight:normal;white-space:nowrap;overflow:hidden;">19</div>
<div style="position:absolute;left:1492px;top:741px;width:152px;height:30px;font-size:13.2px;line-height:30px;text-align:right;color:#404040;font-weight:normal;white-space:nowrap;overflow:hidden;">3,449,415.00</div>
<div style="position:absolute;left:1653px;top:741px;width:183px;height:30px;font-size:13.2px;line-height:30px;text-align:right;color:#333;font-weight:bold;white-space:nowrap;overflow:hidden;">65</div>
<div style="position:absolute;left:1845px;top:741px;width:167px;height:30px;font-size:13.2px;line-height:30px;text-align:right;color:#404040;font-weight:normal;white-space:nowrap;overflow:hidden;">1.20</div>
<div style="position:absolute;left:2021px;top:741px;width:181px;height:30px;font-size:13.2px;line-height:30px;text-align:right;color:#404040;font-weight:normal;white-space:nowrap;overflow:hidden;">0.63</div>
<div style="position:absolute;left:2211px;top:741px;width:212px;height:30px;font-size:13.2px;line-height:30px;text-align:right;color:#404040;font-weight:normal;white-space:nowrap;overflow:hidden;">52,013.50</div>
<div style="position:absolute;left:3px;top:770px;width:2427px;height:30px;background:#f6f8f9;"></div>
<div style="position:absolute;left:1653px;top:770px;width:192px;height:30px;background:#f5d977;"></div>
<div style="position:absolute;left:3px;top:771px;width:105px;height:30px;font-size:13.2px;line-height:30px;text-align:right;color:#404040;font-weight:normal;white-space:nowrap;overflow:hidden;">9</div>
<div style="position:absolute;left:128px;top:771px;width:139px;height:30px;font-size:13.2px;line-height:30px;text-align:left;color:#404040;font-weight:normal;white-space:nowrap;overflow:hidden;">Fairy Fae Field</div>
<div style="position:absolute;left:267px;top:771px;width:131px;height:30px;font-size:13.2px;line-height:30px;text-align:right;color:#404040;font-weight:normal;white-space:nowrap;overflow:hidden;">0</div>
<div style="position:absolute;left:553px;top:771px;width:128px;height:30px;font-size:13.2px;line-height:30px;text-align:left;color:#404040;font-weight:normal;white-space:nowrap;overflow:hidden;">Stadium</div>
<div style="position:absolute;left:681px;top:771px;width:113px;height:30px;font-size:13.2px;line-height:30px;text-align:right;color:#404040;font-weight:normal;white-space:nowrap;overflow:hidden;">246,198</div>
<div style="position:absolute;left:803px;top:771px;width:113px;height:30px;font-size:13.2px;line-height:30px;text-align:right;color:#404040;font-weight:normal;white-space:nowrap;overflow:hidden;">258,708</div>
<div style="position:absolute;left:925px;top:771px;width:113px;height:30px;font-size:13.2px;line-height:30px;text-align:right;color:#404040;font-weight:normal;white-space:nowrap;overflow:hidden;">271,844</div>
<div style="position:absolute;left:1047px;top:771px;width:113px;height:30px;font-size:13.2px;line-height:30px;text-align:right;color:#404040;font-weight:normal;white-space:nowrap;overflow:hidden;">285,636</div>
<div style="position:absolute;left:1169px;top:771px;width:152px;height:30px;font-size:13.2px;line-height:30px;text-align:right;color:#404040;font-weight:normal;white-space:nowrap;overflow:hidden;">1,062,386</div>
<div style="position:absolute;left:1330px;top:771px;width:153px;height:30px;font-size:13.2px;line-height:30px;text-align:right;color:#404040;font-weight:normal;white-space:nowrap;overflow:hidden;">19</div>
<div style="position:absolute;left:1492px;top:771px;width:152px;height:30px;font-size:13.2px;line-height:30px;text-align:right;color:#404040;font-weight:normal;white-space:nowrap;overflow:hidden;">3,709,978.00</div>
<div style="position:absolute;left:1653px;top:771px;width:183px;height:30px;font-size:13.2px;line-height:30px;text-align:right;color:#333;font-weight:bold;white-space:nowrap;overflow:hidden;">67</div>
<div style="position:absolute;left:1845px;top:771px;width:167px;height:30px;font-size:13.2px;line-height:30px;text-align:right;color:#404040;font-weight:normal;white-space:nowrap;overflow:hidden;">1.23</div>
<div style="position:absolute;left:2021px;top:771px;width:181px;height:30px;font-size:13.2px;line-height:30px;text-align:right;color:#404040;font-weight:normal;white-space:nowrap;overflow:hidden;">0.64</div>
<div style="position:absolute;left:2211px;top:771px;width:212px;height:30px;font-size:13.2px;line-height:30px;text-align:right;color:#404040;font-weight:normal;white-space:nowrap;overflow:hidden;">54,763.00</div>
<div style="position:absolute;left:3px;top:800px;width:2427px;height:30px;background:#fff;"></div>
<div style="position:absolute;left:1653px;top:800px;width:192px;height:30px;background:#f5d977;"></div>
<div style="position:absolute;left:3px;top:801px;width:105px;height:30px;font-size:13.2px;line-height:30px;text-align:right;color:#404040;font-weight:normal;white-space:nowrap;overflow:hidden;">10</div>
<div style="position:absolute;left:128px;top:801px;width:139px;height:30px;font-size:13.2px;line-height:30px;text-align:left;color:#404040;font-weight:normal;white-space:nowrap;overflow:hidden;">Funland Isle</div>
<div style="position:absolute;left:267px;top:801px;width:131px;height:30px;font-size:13.2px;line-height:30px;text-align:right;color:#404040;font-weight:normal;white-space:nowrap;overflow:hidden;">0</div>
<div style="position:absolute;left:553px;top:801px;width:128px;height:30px;font-size:13.2px;line-height:30px;text-align:left;color:#404040;font-weight:normal;white-space:nowrap;overflow:hidden;">Stadium</div>
<div style="position:absolute;left:681px;top:801px;width:113px;height:30px;font-size:13.2px;line-height:30px;text-align:right;color:#404040;font-weight:normal;white-space:nowrap;overflow:hidden;">263,399</div>
<div style="position:absolute;left:803px;top:801px;width:113px;height:30px;font-size:13.2px;line-height:30px;text-align:right;color:#404040;font-weight:normal;white-space:nowrap;overflow:hidden;">276,769</div>
<div style="position:absolute;left:925px;top:801px;width:113px;height:30px;font-size:13.2px;line-height:30px;text-align:right;color:#404040;font-weight:normal;white-space:nowrap;overflow:hidden;">290,808</div>
<div style="position:absolute;left:1047px;top:801px;width:113px;height:30px;font-size:13.2px;line-height:30px;text-align:right;color:#404040;font-weight:normal;white-space:nowrap;overflow:hidden;">305,548</div>
<div style="position:absolute;left:1169px;top:801px;width:152px;height:30px;font-size:13.2px;line-height:30px;text-align:right;color:#404040;font-weight:normal;white-space:nowrap;overflow:hidden;">1,136,524</div>
<div style="position:absolute;left:1330px;top:801px;width:153px;height:30px;font-size:13.2px;line-height:30px;text-align:right;color:#404040;font-weight:normal;white-space:nowrap;overflow:hidden;">20</div>
<div style="position:absolute;left:1492px;top:801px;width:152px;height:30px;font-size:13.2px;line-height:30px;text-align:right;color:#404040;font-weight:normal;white-space:nowrap;overflow:hidden;">3,970,538.00</div>
<div style="position:absolute;left:1653px;top:801px;width:183px;height:30px;font-size:13.2px;line-height:30px;text-align:right;color:#333;font-weight:bold;white-space:nowrap;overflow:hidden;">68</div>
<div style="position:absolute;left:1845px;top:801px;width:167px;height:30px;font-size:13.2px;line-height:30px;text-align:right;color:#404040;font-weight:normal;white-space:nowrap;overflow:hidden;">1.25</div>
<div style="position:absolute;left:2021px;top:801px;width:181px;height:30px;font-size:13.2px;line-height:30px;text-align:right;color:#404040;font-weight:normal;white-space:nowrap;overflow:hidden;">0.65</div>
<div style="position:absolute;left:2211px;top:801px;width:212px;height:30px;font-size:13.2px;line-height:30px;text-align:right;color:#404040;font-weight:normal;white-space:nowrap;overflow:hidden;">57,512.50</div>
<div style="position:absolute;left:3px;top:830px;width:2427px;height:30px;background:#f6f8f9;"></div>
<div style="position:absolute;left:1653px;top:830px;width:192px;height:30px;background:#f5d977;"></div>
<div style="position:absolute;left:3px;top:831px;width:105px;height:30px;font-size:13.2px;line-height:30px;text-align:right;color:#404040;font-weight:normal;white-space:nowrap;overflow:hidden;">11</div>
<div style="position:absolute;left:128px;top:831px;width:139px;height:30px;font-size:13.2px;line-height:30px;text-align:left;color:#404040;font-weight:normal;white-space:nowrap;overflow:hidden;">Outlaw Field</div>
<div style="position:absolute;left:267px;top:831px;width:131px;height:30px;font-size:13.2px;line-height:30px;text-align:right;color:#404040;font-weight:normal;white-space:nowrap;overflow:hidden;">0</div>
<div style="position:absolute;left:553px;top:831px;width:128px;height:30px;font-size:13.2px;line-height:30px;text-align:left;color:#404040;font-weight:normal;white-space:nowrap;overflow:hidden;">Stadium</div>
<div style="position:absolute;left:681px;top:831px;width:113px;height:30px;font-size:13.2px;line-height:30px;text-align:right;color:#404040;font-weight:normal;white-space:nowrap;overflow:hidden;">280,600</div>
<div style="position:absolute;left:803px;top:831px;width:113px;height:30px;font-size:13.2px;line-height:30px;text-align:right;color:#404040;font-weight:normal;white-space:nowrap;overflow:hidden;">294,830</div>
<div style="position:absolute;left:925px;top:831px;width:113px;height:30px;font-size:13.2px;line-height:30px;text-align:right;color:#404040;font-weight:normal;white-space:nowrap;overflow:hidden;">309,772</div>
<div style="position:absolute;left:1047px;top:831px;width:113px;height:30px;font-size:13.2px;line-height:30px;text-align:right;color:#404040;font-weight:normal;white-space:nowrap;overflow:hidden;">325,461</div>
<div style="position:absolute;left:1169px;top:831px;width:152px;height:30px;font-size:13.2px;line-height:30px;text-align:right;color:#404040;font-weight:normal;white-space:nowrap;overflow:hidden;">1,210,663</div>
<div style="position:absolute;left:1330px;top:831px;width:153px;height:30px;font-size:13.2px;line-height:30px;text-align:right;color:#404040;font-weight:normal;white-space:nowrap;overflow:hidden;">20</div>
<div style="position:absolute;left:1492px;top:831px;width:152px;height:30px;font-size:13.2px;line-height:30px;text-align:right;color:#404040;font-weight:normal;white-space:nowrap;overflow:hidden;">4,231,099.00</div>
<div style="position:absolute;left:1653px;top:831px;width:183px;height:30px;font-size:13.2px;line-height:30px;text-align:right;color:#333;font-weight:bold;white-space:nowrap;overflow:hidden;">69</div>
<div style="position:absolute;left:1845px;top:831px;width:167px;height:30px;font-size:13.2px;line-height:30px;text-align:right;color:#404040;font-weight:normal;white-space:nowrap;overflow:hidden;">1.27</div>
<div style="position:absolute;left:2021px;top:831px;width:181px;height:30px;font-size:13.2px;line-height:30px;text-align:right;color:#404040;font-weight:normal;white-space:nowrap;overflow:hidden;">0.66</div>
<div style="position:absolute;left:2211px;top:831px;width:212px;height:30px;font-size:13.2px;line-height:30px;text-align:right;color:#404040;font-weight:normal;white-space:nowrap;overflow:hidden;">60,262.00</div>
<div style="position:absolute;left:3px;top:860px;width:2427px;height:30px;background:#fff;"></div>
<div style="position:absolute;left:1653px;top:860px;width:192px;height:30px;background:#f5d977;"></div>
<div style="position:absolute;left:3px;top:861px;width:105px;height:30px;font-size:13.2px;line-height:30px;text-align:right;color:#404040;font-weight:normal;white-space:nowrap;overflow:hidden;">12</div>
<div style="position:absolute;left:128px;top:861px;width:139px;height:30px;font-size:13.2px;line-height:30px;text-align:left;color:#404040;font-weight:normal;white-space:nowrap;overflow:hidden;">Cosmic Crater</div>
<div style="position:absolute;left:267px;top:861px;width:131px;height:30px;font-size:13.2px;line-height:30px;text-align:right;color:#404040;font-weight:normal;white-space:nowrap;overflow:hidden;">0</div>
<div style="position:absolute;left:553px;top:861px;width:128px;height:30px;font-size:13.2px;line-height:30px;text-align:left;color:#404040;font-weight:normal;white-space:nowrap;overflow:hidden;">Stadium</div>
<div style="position:absolute;left:681px;top:861px;width:113px;height:30px;font-size:13.2px;line-height:30px;text-align:right;color:#404040;font-weight:normal;white-space:nowrap;overflow:hidden;">297,802</div>
<div style="position:absolute;left:803px;top:861px;width:113px;height:30px;font-size:13.2px;line-height:30px;text-align:right;color:#404040;font-weight:normal;white-space:nowrap;overflow:hidden;">312,892</div>
<div style="position:absolute;left:925px;top:861px;width:113px;height:30px;font-size:13.2px;line-height:30px;text-align:right;color:#404040;font-weight:normal;white-space:nowrap;overflow:hidden;">328,736</div>
<div style="position:absolute;left:1047px;top:861px;width:113px;height:30px;font-size:13.2px;line-height:30px;text-align:right;color:#404040;font-weight:normal;white-space:nowrap;overflow:hidden;">345,373</div>
<div style="position:absolute;left:1169px;top:861px;width:152px;height:30px;font-size:13.2px;line-height:30px;text-align:right;color:#404040;font-weight:normal;white-space:nowrap;overflow:hidden;">1,284,803</div>
<div style="position:absolute;left:1330px;top:861px;width:153px;height:30px;font-size:13.2px;line-height:30px;text-align:right;color:#404040;font-weight:normal;white-space:nowrap;overflow:hidden;">20</div>
<div style="position:absolute;left:1492px;top:861px;width:152px;height:30px;font-size:13.2px;line-height:30px;text-align:right;color:#404040;font-weight:normal;white-space:nowrap;overflow:hidden;">4,491,659.00</div>
<div style="position:absolute;left:1653px;top:861px;width:183px;height:30px;font-size:13.2px;line-height:30px;text-align:right;color:#333;font-weight:bold;white-space:nowrap;overflow:hidden;">70</div>
<div style="position:absolute;left:1845px;top:861px;width:167px;height:30px;font-size:13.2px;line-height:30px;text-align:right;color:#404040;font-weight:normal;white-space:nowrap;overflow:hidden;">1.29</div>
<div style="position:absolute;left:2021px;top:861px;width:181px;height:30px;font-size:13.2px;line-height:30px;text-align:right;color:#404040;font-weight:normal;white-space:nowrap;overflow:hidden;">0.67</div>
<div style="position:absolute;left:2211px;top:861px;width:212px;height:30px;font-size:13.2px;line-height:30px;text-align:right;color:#404040;font-weight:normal;white-space:nowrap;overflow:hidden;">63,011.50</div>
<div style="position:absolute;left:3px;top:890px;width:2427px;height:30px;background:#f6f8f9;"></div>
<div style="position:absolute;left:1653px;top:890px;width:192px;height:30px;background:#f5d977;"></div>
<div style="position:absolute;left:3px;top:891px;width:105px;height:30px;font-size:13.2px;line-height:30px;text-align:right;color:#404040;font-weight:normal;white-space:nowrap;overflow:hidden;">13</div>
<div style="position:absolute;left:128px;top:891px;width:139px;height:30px;font-size:13.2px;line-height:30px;text-align:left;color:#404040;font-weight:normal;white-space:nowrap;overflow:hidden;">Bonestone Haven</div>
<div style="position:absolute;left:267px;top:891px;width:131px;height:30px;font-size:13.2px;line-height:30px;text-align:right;color:#404040;font-weight:normal;white-space:nowrap;overflow:hidden;">0</div>
<div style="position:absolute;left:553px;top:891px;width:128px;height:30px;font-size:13.2px;line-height:30px;text-align:left;color:#404040;font-weight:normal;white-space:nowrap;overflow:hidden;">Stadium</div>
<div style="position:absolute;left:681px;top:891px;width:113px;height:30px;font-size:13.2px;line-height:30px;text-align:right;color:#404040;font-weight:normal;white-space:nowrap;overflow:hidden;">315,003</div>
<div style="position:absolute;left:803px;top:891px;width:113px;height:30px;font-size:13.2px;line-height:30px;text-align:right;color:#404040;font-weight:normal;white-space:nowrap;overflow:hidden;">330,953</div>
<div style="position:absolute;left:925px;top:891px;width:113px;height:30px;font-size:13.2px;line-height:30px;text-align:right;color:#404040;font-weight:normal;white-space:nowrap;overflow:hidden;">347,701</div>
<div style="position:absolute;left:1047px;top:891px;width:113px;height:30px;font-size:13.2px;line-height:30px;text-align:right;color:#404040;font-weight:normal;white-space:nowrap;overflow:hidden;">365,286</div>
<div style="position:absolute;left:1169px;top:891px;width:152px;height:30px;font-size:13.2px;line-height:30px;text-align:right;color:#404040;font-weight:normal;white-space:nowrap;overflow:hidden;">1,358,943</div>
<div style="position:absolute;left:1330px;top:891px;width:153px;height:30px;font-size:13.2px;line-height:30px;text-align:right;color:#404040;font-weight:normal;white-space:nowrap;overflow:hidden;">21</div>
<div style="position:absolute;left:1492px;top:891px;width:152px;height:30px;font-size:13.2px;line-height:30px;text-align:right;color:#404040;font-weight:normal;white-space:nowrap;overflow:hidden;">4,752,222.00</div>
<div style="position:absolute;left:1653px;top:891px;width:183px;height:30px;font-size:13.2px;line-height:30px;text-align:right;color:#333;font-weight:bold;white-space:nowrap;overflow:hidden;">72</div>
<div style="position:absolute;left:1845px;top:891px;width:167px;height:30px;font-size:13.2px;line-height:30px;text-align:right;color:#404040;font-weight:normal;white-space:nowrap;overflow:hidden;">1.31</div>
<div style="position:absolute;left:2021px;top:891px;width:181px;height:30px;font-size:13.2px;line-height:30px;text-align:right;color:#404040;font-weight:normal;white-space:nowrap;overflow:hidden;">0.68</div>
<div style="position:absolute;left:2211px;top:891px;width:212px;height:30px;font-size:13.2px;line-height:30px;text-align:right;color:#404040;font-weight:normal;white-space:nowrap;overflow:hidden;">65,761.00</div>
<div style="position:absolute;left:3px;top:920px;width:2427px;height:30px;background:#fff;"></div>
<div style="position:absolute;left:1653px;top:920px;width:192px;height:30px;background:#f5d977;"></div>
<div style="position:absolute;left:3px;top:921px;width:105px;height:30px;font-size:13.2px;line-height:30px;text-align:right;color:#404040;font-weight:normal;white-space:nowrap;overflow:hidden;">14</div>
<div style="position:absolute;left:128px;top:921px;width:139px;height:30px;font-size:13.2px;line-height:30px;text-align:left;color:#404040;font-weight:normal;white-space:nowrap;overflow:hidden;">Hauntsville</div>
<div style="position:absolute;left:267px;top:921px;width:131px;height:30px;font-size:13.2px;line-height:30px;text-align:right;color:#404040;font-weight:normal;white-space:nowrap;overflow:hidden;">0</div>
<div style="position:absolute;left:553px;top:921px;width:128px;height:30px;font-size:13.2px;line-height:30px;text-align:left;color:#404040;font-weight:normal;white-space:nowrap;overflow:hidden;">Stadium</div>
<div style="position:absolute;left:681px;top:921px;width:113px;height:30px;font-size:13.2px;line-height:30px;text-align:right;color:#404040;font-weight:normal;white-space:nowrap;overflow:hidden;">332,204</div>
<div style="position:absolute;left:803px;top:921px;width:113px;height:30px;font-size:13.2px;line-height:30px;text-align:right;color:#404040;font-weight:normal;white-space:nowrap;overflow:hidden;">349,014</div>
<div style="position:absolute;left:925px;top:921px;width:113px;height:30px;font-size:13.2px;line-height:30px;text-align:right;color:#404040;font-weight:normal;white-space:nowrap;overflow:hidden;">366,665</div>
<div style="position:absolute;left:1047px;top:921px;width:113px;height:30px;font-size:13.2px;line-height:30px;text-align:right;color:#404040;font-weight:normal;white-space:nowrap;overflow:hidden;">385,198</div>
<div style="position:absolute;left:1169px;top:921px;width:152px;height:30px;font-size:13.2px;line-height:30px;text-align:right;color:#404040;font-weight:normal;white-space:nowrap;overflow:hidden;">1,433,081</div>
<div style="position:absolute;left:1330px;top:921px;width:153px;height:30px;font-size:13.2px;line-height:30px;text-align:right;color:#404040;font-weight:normal;white-space:nowrap;overflow:hidden;">21</div>
<div style="position:absolute;left:1492px;top:921px;width:152px;height:30px;font-size:13.2px;line-height:30px;text-align:right;color:#404040;font-weight:normal;white-space:nowrap;overflow:hidden;">5,012,782.00</div>
<div style="position:absolute;left:1653px;top:921px;width:183px;height:30px;font-size:13.2px;line-height:30px;text-align:right;color:#333;font-weight:bold;white-space:nowrap;overflow:hidden;">72</div>
<div style="position:absolute;left:1845px;top:921px;width:167px;height:30px;font-size:13.2px;line-height:30px;text-align:right;color:#404040;font-weight:normal;white-space:nowrap;overflow:hidden;">1.33</div>
<div style="position:absolute;left:2021px;top:921px;width:181px;height:30px;font-size:13.2px;line-height:30px;text-align:right;color:#404040;font-weight:normal;white-space:nowrap;overflow:hidden;">0.69</div>
<div style="position:absolute;left:2211px;top:921px;width:212px;height:30px;font-size:13.2px;line-height:30px;text-align:right;color:#404040;font-weight:normal;white-space:nowrap;overflow:hidden;">68,510.50</div>
<div style="position:absolute;left:3px;top:950px;width:2427px;height:30px;background:#f6f8f9;"></div>
<div style="position:absolute;left:1653px;top:950px;width:192px;height:30px;background:#f5d977;"></div>
<div style="position:absolute;left:3px;top:951px;width:105px;height:30px;font-size:13.2px;line-height:30px;text-align:right;color:#404040;font-weight:normal;white-space:nowrap;overflow:hidden;">15</div>
<div style="position:absolute;left:128px;top:951px;width:139px;height:30px;font-size:13.2px;line-height:30px;text-align:left;color:#404040;font-weight:normal;white-space:nowrap;overflow:hidden;">Philippine Plaza</div>
<div style="position:absolute;left:267px;top:951px;width:131px;height:30px;font-size:13.2px;line-height:30px;text-align:right;color:#404040;font-weight:normal;white-space:nowrap;overflow:hidden;">0</div>
<div style="position:absolute;left:553px;top:951px;width:128px;height:30px;font-size:13.2px;line-height:30px;text-align:left;color:#404040;font-weight:normal;white-space:nowrap;overflow:hidden;">Stadium</div>
<div style="position:absolute;left:681px;top:951px;width:113px;height:30px;font-size:13.2px;line-height:30px;text-align:right;color:#404040;font-weight:normal;white-space:nowrap;overflow:hidden;">349,405</div>
<div style="position:absolute;left:803px;top:951px;width:113px;height:30px;font-size:13.2px;line-height:30px;text-align:right;color:#404040;font-weight:normal;white-space:nowrap;overflow:hidden;">367,075</div>
<div style="position:absolute;left:925px;top:951px;width:113px;height:30px;font-size:13.2px;line-height:30px;text-align:right;color:#404040;font-weight:normal;white-space:nowrap;overflow:hidden;">385,629</div>
<div style="position:absolute;left:1047px;top:951px;width:113px;height:30px;font-size:13.2px;line-height:30px;text-align:right;color:#404040;font-weight:normal;white-space:nowrap;overflow:hidden;">405,110</div>
<div style="position:absolute;left:1169px;top:951px;width:152px;height:30px;font-size:13.2px;line-height:30px;text-align:right;color:#404040;font-weight:normal;white-space:nowrap;overflow:hidden;">1,507,219</div>
<div style="position:absolute;left:1330px;top:951px;width:153px;height:30px;font-size:13.2px;line-height:30px;text-align:right;color:#404040;font-weight:normal;white-space:nowrap;overflow:hidden;">21</div>
<div style="position:absolute;left:1492px;top:951px;width:152px;height:30px;font-size:13.2px;line-height:30px;text-align:right;color:#404040;font-weight:normal;white-space:nowrap;overflow:hidden;">5,273,341.00</div>
<div style="position:absolute;left:1653px;top:951px;width:183px;height:30px;font-size:13.2px;line-height:30px;text-align:right;color:#333;font-weight:bold;white-space:nowrap;overflow:hidden;">73</div>
<div style="position:absolute;left:1845px;top:951px;width:167px;height:30px;font-size:13.2px;line-height:30px;text-align:right;color:#404040;font-weight:normal;white-space:nowrap;overflow:hidden;">1.34</div>
<div style="position:absolute;left:2021px;top:951px;width:181px;height:30px;font-size:13.2px;line-height:30px;text-align:right;color:#404040;font-weight:normal;white-space:nowrap;overflow:hidden;">0.70</div>
<div style="position:absolute;left:2211px;top:951px;width:212px;height:30px;font-size:13.2px;line-height:30px;text-align:right;color:#404040;font-weight:normal;white-space:nowrap;overflow:hidden;">71,260.00</div>
<div style="position:absolute;left:3px;top:980px;width:2427px;height:30px;background:#fff;"></div>
<div style="position:absolute;left:1653px;top:980px;width:192px;height:30px;background:#f5d977;"></div>
<div style="position:absolute;left:3px;top:981px;width:105px;height:30px;font-size:13.2px;line-height:30px;text-align:right;color:#404040;font-weight:normal;white-space:nowrap;overflow:hidden;">16</div>
<div style="position:absolute;left:128px;top:981px;width:139px;height:30px;font-size:13.2px;line-height:30px;text-align:left;color:#404040;font-weight:normal;white-space:nowrap;overflow:hidden;">Cedar Isle</div>
<div style="position:absolute;left:267px;top:981px;width:131px;height:30px;font-size:13.2px;line-height:30px;text-align:right;color:#404040;font-weight:normal;white-space:nowrap;overflow:hidden;">0</div>
<div style="position:absolute;left:553px;top:981px;width:128px;height:30px;font-size:13.2px;line-height:30px;text-align:left;color:#404040;font-weight:normal;white-space:nowrap;overflow:hidden;">Stadium</div>
<div style="position:absolute;left:681px;top:981px;width:113px;height:30px;font-size:13.2px;line-height:30px;text-align:right;color:#404040;font-weight:normal;white-space:nowrap;overflow:hidden;">366,606</div>
<div style="position:absolute;left:803px;top:981px;width:113px;height:30px;font-size:13.2px;line-height:30px;text-align:right;color:#404040;font-weight:normal;white-space:nowrap;overflow:hidden;">385,136</div>
<div style="position:absolute;left:925px;top:981px;width:113px;height:30px;font-size:13.2px;line-height:30px;text-align:right;color:#404040;font-weight:normal;white-space:nowrap;overflow:hidden;">404,593</div>
<div style="position:absolute;left:1047px;top:981px;width:113px;height:30px;font-size:13.2px;line-height:30px;text-align:right;color:#404040;font-weight:normal;white-space:nowrap;overflow:hidden;">425,023</div>
<div style="position:absolute;left:1169px;top:981px;width:152px;height:30px;font-size:13.2px;line-height:30px;text-align:right;color:#404040;font-weight:normal;white-space:nowrap;overflow:hidden;">1,581,358</div>
<div style="position:absolute;left:1330px;top:981px;width:153px;height:30px;font-size:13.2px;line-height:30px;text-align:right;color:#404040;font-weight:normal;white-space:nowrap;overflow:hidden;">21</div>
<div style="position:absolute;left:1492px;top:981px;width:152px;height:30px;font-size:13.2px;line-height:30px;text-align:right;color:#404040;font-weight:normal;white-space:nowrap;overflow:hidden;">5,533,902.00</div>
<div style="position:absolute;left:1653px;top:981px;width:183px;height:30px;font-size:13.2px;line-height:30px;text-align:right;color:#333;font-weight:bold;white-space:nowrap;overflow:hidden;">74</div>
<div style="position:absolute;left:1845px;top:981px;width:167px;height:30px;font-size:13.2px;line-height:30px;text-align:right;color:#404040;font-weight:normal;white-space:nowrap;overflow:hidden;">1.36</div>
<div style="position:absolute;left:2021px;top:981px;width:181px;height:30px;font-size:13.2px;line-height:30px;text-align:right;color:#404040;font-weight:normal;white-space:nowrap;overflow:hidden;">0.71</div>
<div style="position:absolute;left:2211px;top:981px;width:212px;height:30px;font-size:13.2px;line-height:30px;text-align:right;color:#404040;font-weight:normal;white-space:nowrap;overflow:hidden;">74,009.50</div>
<div style="position:absolute;left:3px;top:1010px;width:2427px;height:30px;background:#f6f8f9;"></div>
<div style="position:absolute;left:1653px;top:1010px;width:192px;height:30px;background:#f5d977;"></div>
<div style="position:absolute;left:3px;top:1011px;width:105px;height:30px;font-size:13.2px;line-height:30px;text-align:right;color:#404040;font-weight:normal;white-space:nowrap;overflow:hidden;">17</div>
<div style="position:absolute;left:128px;top:1011px;width:139px;height:30px;font-size:13.2px;line-height:30px;text-align:left;color:#404040;font-weight:normal;white-space:nowrap;overflow:hidden;">Lion City</div>
<div style="position:absolute;left:267px;top:1011px;width:131px;height:30px;font-size:13.2px;line-height:30px;text-align:right;color:#404040;font-weight:normal;white-space:nowrap;overflow:hidden;">0</div>
<div style="position:absolute;left:553px;top:1011px;width:128px;height:30px;font-size:13.2px;line-height:30px;text-align:left;color:#404040;font-weight:normal;white-space:nowrap;overflow:hidden;">Stadium</div>
<div style="position:absolute;left:681px;top:1011px;width:113px;height:30px;font-size:13.2px;line-height:30px;text-align:right;color:#404040;font-weight:normal;white-space:nowrap;overflow:hidden;">383,807</div>
<div style="position:absolute;left:803px;top:1011px;width:113px;height:30px;font-size:13.2px;line-height:30px;text-align:right;color:#404040;font-weight:normal;white-space:nowrap;overflow:hidden;">403,198</div>
<div style="position:absolute;left:925px;top:1011px;width:113px;height:30px;font-size:13.2px;line-height:30px;text-align:right;color:#404040;font-weight:normal;white-space:nowrap;overflow:hidden;">423,557</div>
<div style="position:absolute;left:1047px;top:1011px;width:113px;height:30px;font-size:13.2px;line-height:30px;text-align:right;color:#404040;font-weight:normal;white-space:nowrap;overflow:hidden;">444,935</div>
<div style="position:absolute;left:1169px;top:1011px;width:152px;height:30px;font-size:13.2px;line-height:30px;text-align:right;color:#404040;font-weight:normal;white-space:nowrap;overflow:hidden;">1,655,497</div>
<div style="position:absolute;left:1330px;top:1011px;width:153px;height:30px;font-size:13.2px;line-height:30px;text-align:right;color:#404040;font-weight:normal;white-space:nowrap;overflow:hidden;">22</div>
<div style="position:absolute;left:1492px;top:1011px;width:152px;height:30px;font-size:13.2px;line-height:30px;text-align:right;color:#404040;font-weight:normal;white-space:nowrap;overflow:hidden;">5,794,462.00</div>
<div style="position:absolute;left:1653px;top:1011px;width:183px;height:30px;font-size:13.2px;line-height:30px;text-align:right;color:#333;font-weight:bold;white-space:nowrap;overflow:hidden;">75</div>
<div style="position:absolute;left:1845px;top:1011px;width:167px;height:30px;font-size:13.2px;line-height:30px;text-align:right;color:#404040;font-weight:normal;white-space:nowrap;overflow:hidden;">1.37</div>
<div style="position:absolute;left:2021px;top:1011px;width:181px;height:30px;font-size:13.2px;line-height:30px;text-align:right;color:#404040;font-weight:normal;white-space:nowrap;overflow:hidden;">0.72</div>
<div style="position:absolute;left:2211px;top:1011px;width:212px;height:30px;font-size:13.2px;line-height:30px;text-align:right;color:#404040;font-weight:normal;white-space:nowrap;overflow:hidden;">76,759.00</div>
<div style="position:absolute;left:3px;top:1040px;width:2427px;height:30px;background:#fff;"></div>
<div style="position:absolute;left:1653px;top:1040px;width:192px;height:30px;background:#cc6a64;"></div>
<div style="position:absolute;left:3px;top:1041px;width:105px;height:30px;font-size:13.2px;line-height:30px;text-align:right;color:#404040;font-weight:normal;white-space:nowrap;overflow:hidden;">18</div>
<div style="position:absolute;left:128px;top:1041px;width:139px;height:30px;font-size:13.2px;line-height:30px;text-align:left;color:#404040;font-weight:normal;white-space:nowrap;overflow:hidden;">Playtime Court</div>
<div style="position:absolute;left:267px;top:1041px;width:131px;height:30px;font-size:13.2px;line-height:30px;text-align:right;color:#404040;font-weight:normal;white-space:nowrap;overflow:hidden;">0</div>
<div style="position:absolute;left:553px;top:1041px;width:128px;height:30px;font-size:13.2px;line-height:30px;text-align:left;color:#404040;font-weight:normal;white-space:nowrap;overflow:hidden;">Stadium</div>
<div style="position:absolute;left:681px;top:1041px;width:113px;height:30px;font-size:13.2px;line-height:30px;text-align:right;color:#404040;font-weight:normal;white-space:nowrap;overflow:hidden;">401,008</div>
<div style="position:absolute;left:803px;top:1041px;width:113px;height:30px;font-size:13.2px;line-height:30px;text-align:right;color:#404040;font-weight:normal;white-space:nowrap;overflow:hidden;">421,259</div>
<div style="position:absolute;left:925px;top:1041px;width:113px;height:30px;font-size:13.2px;line-height:30px;text-align:right;color:#404040;font-weight:normal;white-space:nowrap;overflow:hidden;">442,522</div>
<div style="position:absolute;left:1047px;top:1041px;width:113px;height:30px;font-size:13.2px;line-height:30px;text-align:right;color:#404040;font-weight:normal;white-space:nowrap;overflow:hidden;">464,848</div>
<div style="position:absolute;left:1169px;top:1041px;width:152px;height:30px;font-size:13.2px;line-height:30px;text-align:right;color:#404040;font-weight:normal;white-space:nowrap;overflow:hidden;">1,729,637</div>
<div style="position:absolute;left:1330px;top:1041px;width:153px;height:30px;font-size:13.2px;line-height:30px;text-align:right;color:#404040;font-weight:normal;white-space:nowrap;overflow:hidden;">22</div>
<div style="position:absolute;left:1492px;top:1041px;width:152px;height:30px;font-size:13.2px;line-height:30px;text-align:right;color:#404040;font-weight:normal;white-space:nowrap;overflow:hidden;">6,055,025.00</div>
<div style="position:absolute;left:1653px;top:1041px;width:183px;height:30px;font-size:13.2px;line-height:30px;text-align:right;color:#333;font-weight:bold;white-space:nowrap;overflow:hidden;">76</div>
<div style="position:absolute;left:1845px;top:1041px;width:167px;height:30px;font-size:13.2px;line-height:30px;text-align:right;color:#404040;font-weight:normal;white-space:nowrap;overflow:hidden;">1.39</div>
<div style="position:absolute;left:2021px;top:1041px;width:181px;height:30px;font-size:13.2px;line-height:30px;text-align:right;color:#404040;font-weight:normal;white-space:nowrap;overflow:hidden;">0.72</div>
<div style="position:absolute;left:2211px;top:1041px;width:212px;height:30px;font-size:13.2px;line-height:30px;text-align:right;color:#404040;font-weight:normal;white-space:nowrap;overflow:hidden;">79,508.50</div>
<div style="position:absolute;left:3px;top:1070px;width:2427px;height:30px;background:#f6f8f9;"></div>
<div style="position:absolute;left:1653px;top:1070px;width:192px;height:30px;background:#cc6a64;"></div>
<div style="position:absolute;left:3px;top:1071px;width:105px;height:30px;font-size:13.2px;line-height:30px;text-align:right;color:#404040;font-weight:normal;white-space:nowrap;overflow:hidden;">19</div>
<div style="position:absolute;left:128px;top:1071px;width:139px;height:30px;font-size:13.2px;line-height:30px;text-align:left;color:#404040;font-weight:normal;white-space:nowrap;overflow:hidden;">Shogun's Temple</div>
<div style="position:absolute;left:267px;top:1071px;width:131px;height:30px;font-size:13.2px;line-height:30px;text-align:right;color:#404040;font-weight:normal;white-space:nowrap;overflow:hidden;">0</div>
<div style="position:absolute;left:553px;top:1071px;width:128px;height:30px;font-size:13.2px;line-height:30px;text-align:left;color:#404040;font-weight:normal;white-space:nowrap;overflow:hidden;">Stadium</div>
<div style="position:absolute;left:681px;top:1071px;width:113px;height:30px;font-size:13.2px;line-height:30px;text-align:right;color:#404040;font-weight:normal;white-space:nowrap;overflow:hidden;">418,209</div>
<div style="position:absolute;left:803px;top:1071px;width:113px;height:30px;font-size:13.2px;line-height:30px;text-align:right;color:#404040;font-weight:normal;white-space:nowrap;overflow:hidden;">439,320</div>
<div style="position:absolute;left:925px;top:1071px;width:113px;height:30px;font-size:13.2px;line-height:30px;text-align:right;color:#404040;font-weight:normal;white-space:nowrap;overflow:hidden;">461,486</div>
<div style="position:absolute;left:1047px;top:1071px;width:113px;height:30px;font-size:13.2px;line-height:30px;text-align:right;color:#404040;font-weight:normal;white-space:nowrap;overflow:hidden;">484,760</div>
<div style="position:absolute;left:1169px;top:1071px;width:152px;height:30px;font-size:13.2px;line-height:30px;text-align:right;color:#404040;font-weight:normal;white-space:nowrap;overflow:hidden;">1,803,775</div>
<div style="position:absolute;left:1330px;top:1071px;width:153px;height:30px;font-size:13.2px;line-height:30px;text-align:right;color:#404040;font-weight:normal;white-space:nowrap;overflow:hidden;">22</div>
<div style="position:absolute;left:1492px;top:1071px;width:152px;height:30px;font-size:13.2px;line-height:30px;text-align:right;color:#404040;font-weight:normal;white-space:nowrap;overflow:hidden;">6,315,582.00</div>
<div style="position:absolute;left:1653px;top:1071px;width:183px;height:30px;font-size:13.2px;line-height:30px;text-align:right;color:#333;font-weight:bold;white-space:nowrap;overflow:hidden;">76</div>
<div style="position:absolute;left:1845px;top:1071px;width:167px;height:30px;font-size:13.2px;line-height:30px;text-align:right;color:#404040;font-weight:normal;white-space:nowrap;overflow:hidden;">1.40</div>
<div style="position:absolute;left:2021px;top:1071px;width:181px;height:30px;font-size:13.2px;line-height:30px;text-align:right;color:#404040;font-weight:normal;white-space:nowrap;overflow:hidden;">0.73</div>
<div style="position:absolute;left:2211px;top:1071px;width:212px;height:30px;font-size:13.2px;line-height:30px;text-align:right;color:#404040;font-weight:normal;white-space:nowrap;overflow:hidden;">82,258.00</div>
<div style="position:absolute;left:3px;top:1100px;width:2427px;height:30px;background:#fff;"></div>
<div style="position:absolute;left:1653px;top:1100px;width:192px;height:30px;background:#cc6a64;"></div>
<div style="position:absolute;left:3px;top:1101px;width:105px;height:30px;font-size:13.2px;line-height:30px;text-align:right;color:#404040;font-weight:normal;white-space:nowrap;overflow:hidden;">20</div>
<div style="position:absolute;left:128px;top:1101px;width:139px;height:30px;font-size:13.2px;line-height:30px;text-align:left;color:#404040;font-weight:normal;white-space:nowrap;overflow:hidden;">El Dorado</div>
<div style="position:absolute;left:267px;top:1101px;width:131px;height:30px;font-size:13.2px;line-height:30px;text-align:right;color:#404040;font-weight:normal;white-space:nowrap;overflow:hidden;">0</div>
<div style="position:absolute;left:553px;top:1101px;width:128px;height:30px;font-size:13.2px;line-height:30px;text-align:left;color:#404040;font-weight:normal;white-space:nowrap;overflow:hidden;">Stadium</div>
<div style="position:absolute;left:681px;top:1101px;width:113px;height:30px;font-size:13.2px;line-height:30px;text-align:right;color:#404040;font-weight:normal;white-space:nowrap;overflow:hidden;">435,411</div>
<div style="position:absolute;left:803px;top:1101px;width:113px;height:30px;font-size:13.2px;line-height:30px;text-align:right;color:#404040;font-weight:normal;white-space:nowrap;overflow:hidden;">457,381</div>
<div style="position:absolute;left:925px;top:1101px;width:113px;height:30px;font-size:13.2px;line-height:30px;text-align:right;color:#404040;font-weight:normal;white-space:nowrap;overflow:hidden;">480,450</div>
<div style="position:absolute;left:1047px;top:1101px;width:113px;height:30px;font-size:13.2px;line-height:30px;text-align:right;color:#404040;font-weight:normal;white-space:nowrap;overflow:hidden;">504,673</div>
<div style="position:absolute;left:1169px;top:1101px;width:152px;height:30px;font-size:13.2px;line-height:30px;text-align:right;color:#404040;font-weight:normal;white-space:nowrap;overflow:hidden;">1,877,915</div>
<div style="position:absolute;left:1330px;top:1101px;width:153px;height:30px;font-size:13.2px;line-height:30px;text-align:right;color:#404040;font-weight:normal;white-space:nowrap;overflow:hidden;">22</div>
<div style="position:absolute;left:1492px;top:1101px;width:152px;height:30px;font-size:13.2px;line-height:30px;text-align:right;color:#404040;font-weight:normal;white-space:nowrap;overflow:hidden;">6,576,144.00</div>
<div style="position:absolute;left:1653px;top:1101px;width:183px;height:30px;font-size:13.2px;line-height:30px;text-align:right;color:#333;font-weight:bold;white-space:nowrap;overflow:hidden;">77</div>
<div style="position:absolute;left:1845px;top:1101px;width:167px;height:30px;font-size:13.2px;line-height:30px;text-align:right;color:#404040;font-weight:normal;white-space:nowrap;overflow:hidden;">1.41</div>
<div style="position:absolute;left:2021px;top:1101px;width:181px;height:30px;font-size:13.2px;line-height:30px;text-align:right;color:#404040;font-weight:normal;white-space:nowrap;overflow:hidden;">0.73</div>
<div style="position:absolute;left:2211px;top:1101px;width:212px;height:30px;font-size:13.2px;line-height:30px;text-align:right;color:#404040;font-weight:normal;white-space:nowrap;overflow:hidden;">85,007.50</div>
<div style="position:absolute;left:3px;top:1130px;width:2427px;height:30px;background:#f6f8f9;"></div>
<div style="position:absolute;left:1653px;top:1130px;width:192px;height:30px;background:#cc6a64;"></div>
<div style="position:absolute;left:3px;top:1131px;width:105px;height:30px;font-size:13.2px;line-height:30px;text-align:right;color:#404040;font-weight:normal;white-space:nowrap;overflow:hidden;">21</div>
<div style="position:absolute;left:128px;top:1131px;width:139px;height:30px;font-size:13.2px;line-height:30px;text-align:left;color:#404040;font-weight:normal;white-space:nowrap;overflow:hidden;">Roman Expedition</div>
<div style="position:absolute;left:267px;top:1131px;width:131px;height:30px;font-size:13.2px;line-height:30px;text-align:right;color:#404040;font-weight:normal;white-space:nowrap;overflow:hidden;">0</div>
<div style="position:absolute;left:553px;top:1131px;width:128px;height:30px;font-size:13.2px;line-height:30px;text-align:left;color:#404040;font-weight:normal;white-space:nowrap;overflow:hidden;">Stadium</div>
<div style="position:absolute;left:681px;top:1131px;width:113px;height:30px;font-size:13.2px;line-height:30px;text-align:right;color:#404040;font-weight:normal;white-space:nowrap;overflow:hidden;">452,612</div>
<div style="position:absolute;left:803px;top:1131px;width:113px;height:30px;font-size:13.2px;line-height:30px;text-align:right;color:#404040;font-weight:normal;white-space:nowrap;overflow:hidden;">475,442</div>
<div style="position:absolute;left:925px;top:1131px;width:113px;height:30px;font-size:13.2px;line-height:30px;text-align:right;color:#404040;font-weight:normal;white-space:nowrap;overflow:hidden;">499,414</div>
<div style="position:absolute;left:1047px;top:1131px;width:113px;height:30px;font-size:13.2px;line-height:30px;text-align:right;color:#404040;font-weight:normal;white-space:nowrap;overflow:hidden;">524,585</div>
<div style="position:absolute;left:1169px;top:1131px;width:152px;height:30px;font-size:13.2px;line-height:30px;text-align:right;color:#404040;font-weight:normal;white-space:nowrap;overflow:hidden;">1,952,053</div>
<div style="position:absolute;left:1330px;top:1131px;width:153px;height:30px;font-size:13.2px;line-height:30px;text-align:right;color:#404040;font-weight:normal;white-space:nowrap;overflow:hidden;">22</div>
<div style="position:absolute;left:1492px;top:1131px;width:152px;height:30px;font-size:13.2px;line-height:30px;text-align:right;color:#404040;font-weight:normal;white-space:nowrap;overflow:hidden;">6,836,705.00</div>
<div style="position:absolute;left:1653px;top:1131px;width:183px;height:30px;font-size:13.2px;line-height:30px;text-align:right;color:#333;font-weight:bold;white-space:nowrap;overflow:hidden;">77</div>
<div style="position:absolute;left:1845px;top:1131px;width:167px;height:30px;font-size:13.2px;line-height:30px;text-align:right;color:#404040;font-weight:normal;white-space:nowrap;overflow:hidden;">1.42</div>
<div style="position:absolute;left:2021px;top:1131px;width:181px;height:30px;font-size:13.2px;line-height:30px;text-align:right;color:#404040;font-weight:normal;white-space:nowrap;overflow:hidden;">0.74</div>
<div style="position:absolute;left:2211px;top:1131px;width:212px;height:30px;font-size:13.2px;line-height:30px;text-align:right;color:#404040;font-weight:normal;white-space:nowrap;overflow:hidden;">87,757.00</div>
<div style="position:absolute;left:3px;top:500px;width:2427px;height:1px;background:#2a4436;"></div>
<div style="position:absolute;left:2px;top:470px;width:2px;height:683px;background:#215a36;"></div>
<div style="position:absolute;left:0px;top:1152px;width:2430px;height:1px;background:#dadce0;"></div>
<div style="position:absolute;left:118px;top:0px;width:4px;height:1153px;background:#c7c7c7;"></div>
<div style="position:absolute;left:2211px;top:1px;width:219px;height:2px;background:#3b5fd8;"></div>
<div style="position:absolute;left:2211px;top:30px;width:216px;height:2px;background:#3b5fd8;"></div>
<div style="position:absolute;left:2211px;top:1px;width:2px;height:31px;background:#3b5fd8;"></div>
<div style="position:absolute;left:2426px;top:28px;width:8px;height:8px;border-radius:50%;background:#3b5fd8;"></div>
<svg style="position:absolute;left:460px;top:33px" width="602" height="373" viewBox="460 33 602 373" font-family='"Liberation Sans", sans-serif'><rect x="460.5" y="33.5" width="601" height="372" fill="#fff" stroke="#9e9e9e"/><text x="480" y="69" font-size="20" fill="#757575">Total cost per island</text><rect x="592" y="89.9" width="451" height="1" fill="#cccccc"/><text x="586" y="94.5" font-size="12" fill="#111" text-anchor="end">80,000,000.00</text><rect x="592" y="162.5" width="451" height="1" fill="#cccccc"/><text x="586" y="167.1" font-size="12" fill="#111" text-anchor="end">60,000,000.00</text><rect x="592" y="234.8" width="451" height="1" fill="#cccccc"/><text x="586" y="239.4" font-size="12" fill="#111" text-anchor="end">40,000,000.00</text><rect x="592" y="307.7" width="451" height="1" fill="#cccccc"/><text x="586" y="312.3" font-size="12" fill="#111" text-anchor="end">20,000,000.00</text><rect x="592" y="380" width="451" height="1" fill="#2a2a2a"/><text x="586" y="383.9" font-size="12" fill="#111" text-anchor="end">0.00</text><text transform="translate(489,235.5) rotate(-90)" font-size="12" fill="#222" text-anchor="middle">Total cost per island</text><path d="M594.00,375.00 L692.00,328.74 L700.95,324.24 L709.90,319.67 L718.85,315.03 L727.81,310.33 L736.76,305.55 L745.71,300.71 L754.66,295.79 L763.61,290.81 L772.56,285.76 L781.51,280.64 L790.46,275.45 L799.42,270.19 L808.37,264.86 L817.32,259.47 L826.27,254.00 L835.22,248.47 L844.17,242.87 L853.12,237.20 L862.07,231.46 L871.03,225.65 L879.98,219.77 L888.93,213.82 L897.88,207.81 L906.83,201.72 L915.78,195.57 L924.73,189.34 L933.68,183.05 L942.64,176.69 L951.59,170.26 L960.54,163.76 L969.49,157.20 L978.44,150.56 L987.39,143.86 L996.34,137.08 L1005.29,130.24 L1014.25,123.33 L1023.20,116.35 L1032.15,109.30 L1041.10,102.18" fill="none" stroke="#4a78e8" stroke-width="2" stroke-linejoin="round"/></svg>
<svg style="position:absolute;left:1079px;top:33px" width="602" height="373" viewBox="1079 33 602 373" font-family='"Liberation Sans", sans-serif'><rect x="1079.5" y="33.5" width="601" height="372" fill="#fff" stroke="#9e9e9e"/><text x="1099" y="69" font-size="20" fill="#757575">Days to finish islands</text><rect x="1240" y="89" width="12" height="4" fill="#4a78e8"/><text x="1261" y="95" font-size="12" fill="#333">50 kicks (1 session)</text><rect x="1381" y="89" width="12" height="4" fill="#d5473a"/><text x="1402" y="95" font-size="12" fill="#333">100 kicks (2 sessions)</text><rect x="1157" y="115.0" width="505" height="1" fill="#cccccc"/><text x="1152" y="119.0" font-size="12" fill="#111" text-anchor="end">4.00</text><rect x="1157" y="180.8" width="505" height="1" fill="#cccccc"/><text x="1152" y="184.8" font-size="12" fill="#111" text-anchor="end">3.00</text><rect x="1157" y="246.8" width="505" height="1" fill="#cccccc"/><text x="1152" y="250.8" font-size="12" fill="#111" text-anchor="end">2.00</text><rect x="1157" y="313.9" width="505" height="1" fill="#cccccc"/><text x="1152" y="317.9" font-size="12" fill="#111" text-anchor="end">1.00</text><rect x="1157" y="380" width="505" height="1" fill="#2a2a2a"/><text x="1152" y="383.9" font-size="12" fill="#111" text-anchor="end">0.00</text><text transform="translate(1108,248) rotate(-90)" font-size="12" fill="#222" text-anchor="middle">Days to finish islands</text><path d="M1158.8,324.4 C1159.2,322.3 1160.3,315.8 1161.4,312.0 C1162.5,308.2 1164.0,304.4 1165.3,301.5 C1166.6,298.6 1167.5,297.0 1169.1,294.8 C1170.7,292.6 1172.4,290.2 1174.8,288.1 C1177.2,286.0 1180.4,283.9 1183.4,282.4 C1186.4,280.9 1188.9,280.2 1192.9,279.1 C1196.9,278.0 1193.0,279.4 1207.2,275.7 C1221.4,272.0 1266.2,259.9 1278.0,256.8 L1279.6,262 L1284.3,262 L1285,256.5 L1285.0,256.0 C1302.5,251.7 1372.2,234.6 1389.7,230.3 L1391.3,228.1 C1397.7,226.2 1416.9,220.3 1429.7,216.4 C1442.6,212.4 1455.4,208.3 1468.2,204.2 C1481.0,200.0 1493.8,195.8 1506.6,191.6 C1519.4,187.3 1532.3,183.0 1545.1,178.6 C1557.9,174.2 1570.7,169.7 1583.5,165.2 C1596.3,160.7 1609.1,156.1 1622.0,151.4 C1634.8,146.8 1654.0,139.6 1660.4,137.3" fill="none" stroke="#4a78e8" stroke-width="2" stroke-linejoin="round"/><path d="M1158.8,351.0 C1159.5,349.4 1161.6,344.0 1163.3,341.5 C1165.0,339.0 1167.0,337.4 1169.1,335.8 C1171.2,334.2 1173.3,333.0 1175.7,332.0 C1178.1,331.0 1180.5,330.3 1183.4,329.6 C1186.3,328.9 1188.9,328.4 1192.9,327.7 C1196.9,327.0 1193.0,327.3 1207.2,325.3 C1221.4,323.3 1266.2,317.5 1278.0,315.9 L1279.6,321.2 L1284.3,321.2 L1285.8,315.2 L1285.8,315.0 C1303.1,312.9 1372.4,304.5 1389.7,302.4 L1391.0,304.9 C1397.4,303.7 1416.7,299.9 1429.5,297.5 C1442.3,295.0 1455.1,292.6 1468.0,290.2 C1480.8,287.9 1493.6,285.6 1506.5,283.3 C1519.3,281.0 1532.1,278.8 1544.9,276.6 C1557.8,274.4 1570.6,272.2 1583.4,270.1 C1596.3,268.0 1609.1,265.9 1621.9,263.9 C1634.7,261.9 1654.0,259.0 1660.4,258.0" fill="none" stroke="#d5473a" stroke-width="2" stroke-linejoin="round"/></svg>
</body></html>
